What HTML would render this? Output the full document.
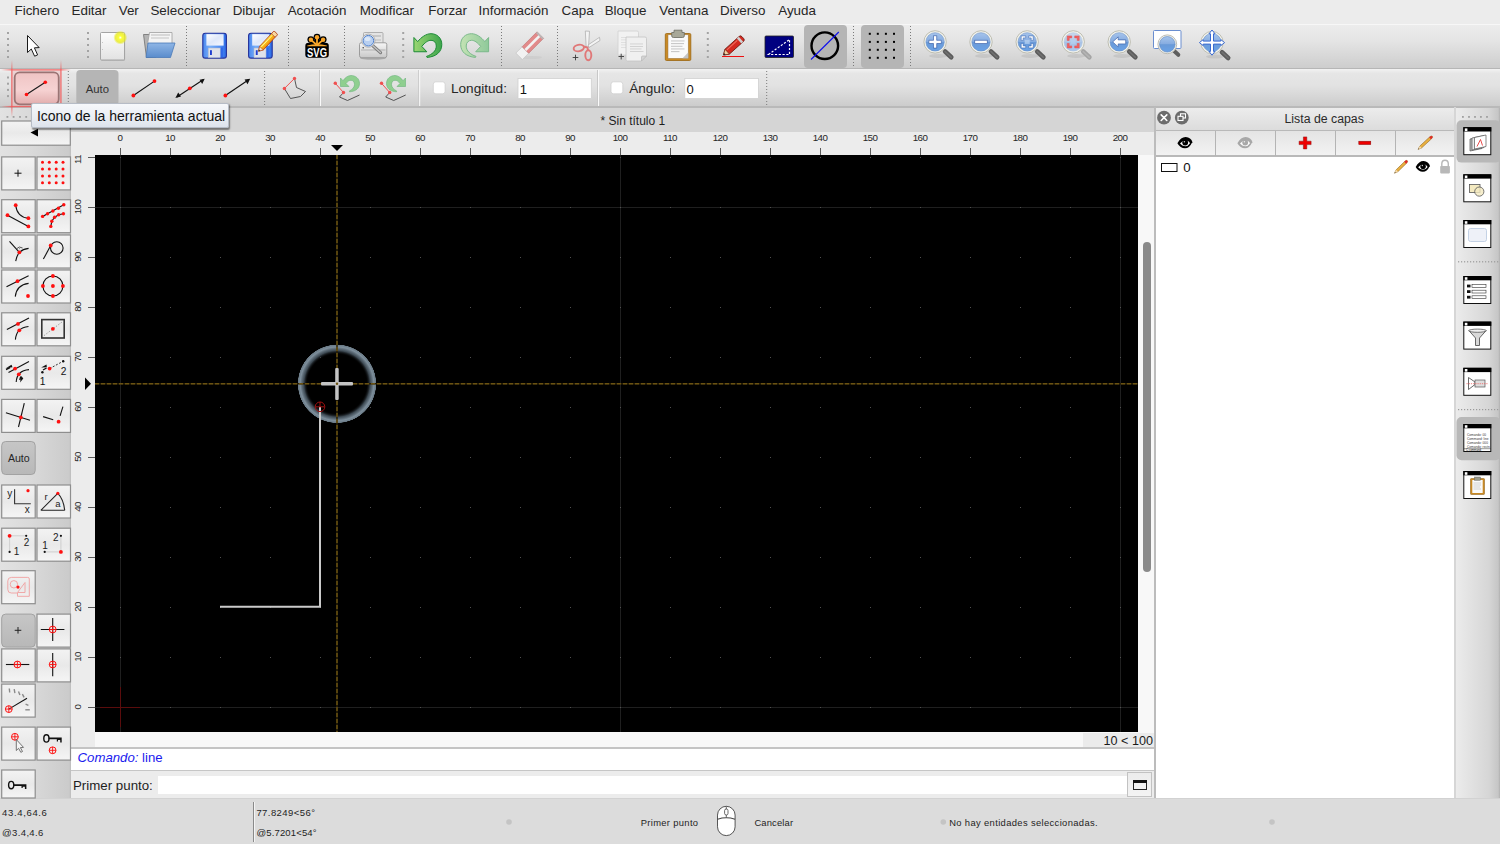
<!DOCTYPE html>
<html><head><meta charset="utf-8"><style>
html,body{margin:0;padding:0;width:1500px;height:844px;overflow:hidden;background:#ececec;position:relative}
body{font-family:"Liberation Sans",sans-serif}
.t{position:absolute;white-space:nowrap}
.r{position:absolute;display:block}
</style></head><body>
<div class="r" style="left:0px;top:0px;width:1500px;height:24px;background:#ececec"></div>
<div class="r" style="left:0px;top:24px;width:1500px;height:44px;background:linear-gradient(#ececec,#e5e5e5 35%,#cdcdcd);border-top:1px solid #f7f7f7;box-sizing:border-box"></div>
<div class="r" style="left:0px;top:68px;width:1500px;height:1px;background:#b6b6b6"></div>
<div class="r" style="left:0px;top:69px;width:1500px;height:37px;background:linear-gradient(#f2f2f2,#e6e6e6 12%,#e2e2e2 45%,#cccccc)"></div>
<div class="r" style="left:0px;top:106px;width:1500px;height:2px;background:#b9b9b9"></div>
<div class="r" style="left:0px;top:108px;width:72px;height:690px;background:linear-gradient(90deg,#e2e2e2,#d9d9d9 45%,#cbcbcb 96%,#b4b4b4)"></div>
<div class="r" style="left:1455px;top:108px;width:45px;height:690px;background:linear-gradient(90deg,#ececec,#d6d6d6 75%,#c6c6c6 96%,#b0b0b0)"></div>
<div class="r" style="left:1455px;top:108px;width:1px;height:690px;background:#d0d0d0"></div>
<div class="r" style="left:71px;top:108px;width:1084px;height:24px;background:#d5d5d5"></div>
<div class="r" style="left:71px;top:132px;width:1084px;height:616px;background:#ececec"></div>
<div class="r" style="left:95px;top:732px;width:1060px;height:16px;background:#f8f8f8"></div>
<svg class="r" style="left:71px;top:132px" width="1084" height="616" viewBox="71 132 1084 616" font-family="Liberation Sans"><text x="120" y="141.2" text-anchor="middle" font-size="9.8" fill="#262626" letter-spacing="-0.6">0</text><rect x="120" y="148" width="1" height="7" fill="#5a5a5a"/><text x="170" y="141.2" text-anchor="middle" font-size="9.8" fill="#262626" letter-spacing="-0.6">10</text><rect x="170" y="148" width="1" height="7" fill="#5a5a5a"/><text x="220" y="141.2" text-anchor="middle" font-size="9.8" fill="#262626" letter-spacing="-0.6">20</text><rect x="220" y="148" width="1" height="7" fill="#5a5a5a"/><text x="270" y="141.2" text-anchor="middle" font-size="9.8" fill="#262626" letter-spacing="-0.6">30</text><rect x="270" y="148" width="1" height="7" fill="#5a5a5a"/><text x="320" y="141.2" text-anchor="middle" font-size="9.8" fill="#262626" letter-spacing="-0.6">40</text><rect x="320" y="148" width="1" height="7" fill="#5a5a5a"/><text x="370" y="141.2" text-anchor="middle" font-size="9.8" fill="#262626" letter-spacing="-0.6">50</text><rect x="370" y="148" width="1" height="7" fill="#5a5a5a"/><text x="420" y="141.2" text-anchor="middle" font-size="9.8" fill="#262626" letter-spacing="-0.6">60</text><rect x="420" y="148" width="1" height="7" fill="#5a5a5a"/><text x="470" y="141.2" text-anchor="middle" font-size="9.8" fill="#262626" letter-spacing="-0.6">70</text><rect x="470" y="148" width="1" height="7" fill="#5a5a5a"/><text x="520" y="141.2" text-anchor="middle" font-size="9.8" fill="#262626" letter-spacing="-0.6">80</text><rect x="520" y="148" width="1" height="7" fill="#5a5a5a"/><text x="570" y="141.2" text-anchor="middle" font-size="9.8" fill="#262626" letter-spacing="-0.6">90</text><rect x="570" y="148" width="1" height="7" fill="#5a5a5a"/><text x="620" y="141.2" text-anchor="middle" font-size="9.8" fill="#262626" letter-spacing="-0.6">100</text><rect x="620" y="148" width="1" height="7" fill="#5a5a5a"/><text x="670" y="141.2" text-anchor="middle" font-size="9.8" fill="#262626" letter-spacing="-0.6">110</text><rect x="670" y="148" width="1" height="7" fill="#5a5a5a"/><text x="720" y="141.2" text-anchor="middle" font-size="9.8" fill="#262626" letter-spacing="-0.6">120</text><rect x="720" y="148" width="1" height="7" fill="#5a5a5a"/><text x="770" y="141.2" text-anchor="middle" font-size="9.8" fill="#262626" letter-spacing="-0.6">130</text><rect x="770" y="148" width="1" height="7" fill="#5a5a5a"/><text x="820" y="141.2" text-anchor="middle" font-size="9.8" fill="#262626" letter-spacing="-0.6">140</text><rect x="820" y="148" width="1" height="7" fill="#5a5a5a"/><text x="870" y="141.2" text-anchor="middle" font-size="9.8" fill="#262626" letter-spacing="-0.6">150</text><rect x="870" y="148" width="1" height="7" fill="#5a5a5a"/><text x="920" y="141.2" text-anchor="middle" font-size="9.8" fill="#262626" letter-spacing="-0.6">160</text><rect x="920" y="148" width="1" height="7" fill="#5a5a5a"/><text x="970" y="141.2" text-anchor="middle" font-size="9.8" fill="#262626" letter-spacing="-0.6">170</text><rect x="970" y="148" width="1" height="7" fill="#5a5a5a"/><text x="1020" y="141.2" text-anchor="middle" font-size="9.8" fill="#262626" letter-spacing="-0.6">180</text><rect x="1020" y="148" width="1" height="7" fill="#5a5a5a"/><text x="1070" y="141.2" text-anchor="middle" font-size="9.8" fill="#262626" letter-spacing="-0.6">190</text><rect x="1070" y="148" width="1" height="7" fill="#5a5a5a"/><text x="1120" y="141.2" text-anchor="middle" font-size="9.8" fill="#262626" letter-spacing="-0.6">200</text><rect x="1120" y="148" width="1" height="7" fill="#5a5a5a"/><svg x="71" y="155" width="24" height="577" viewBox="71 155 24 577"><text transform="translate(80.6,707) rotate(-90)" text-anchor="middle" font-size="9.8" fill="#262626" letter-spacing="-0.6">0</text><rect x="88" y="707" width="7" height="1" fill="#5a5a5a"/><text transform="translate(80.6,657) rotate(-90)" text-anchor="middle" font-size="9.8" fill="#262626" letter-spacing="-0.6">10</text><rect x="88" y="657" width="7" height="1" fill="#5a5a5a"/><text transform="translate(80.6,607) rotate(-90)" text-anchor="middle" font-size="9.8" fill="#262626" letter-spacing="-0.6">20</text><rect x="88" y="607" width="7" height="1" fill="#5a5a5a"/><text transform="translate(80.6,557) rotate(-90)" text-anchor="middle" font-size="9.8" fill="#262626" letter-spacing="-0.6">30</text><rect x="88" y="557" width="7" height="1" fill="#5a5a5a"/><text transform="translate(80.6,507) rotate(-90)" text-anchor="middle" font-size="9.8" fill="#262626" letter-spacing="-0.6">40</text><rect x="88" y="507" width="7" height="1" fill="#5a5a5a"/><text transform="translate(80.6,457) rotate(-90)" text-anchor="middle" font-size="9.8" fill="#262626" letter-spacing="-0.6">50</text><rect x="88" y="457" width="7" height="1" fill="#5a5a5a"/><text transform="translate(80.6,407) rotate(-90)" text-anchor="middle" font-size="9.8" fill="#262626" letter-spacing="-0.6">60</text><rect x="88" y="407" width="7" height="1" fill="#5a5a5a"/><text transform="translate(80.6,357) rotate(-90)" text-anchor="middle" font-size="9.8" fill="#262626" letter-spacing="-0.6">70</text><rect x="88" y="357" width="7" height="1" fill="#5a5a5a"/><text transform="translate(80.6,307) rotate(-90)" text-anchor="middle" font-size="9.8" fill="#262626" letter-spacing="-0.6">80</text><rect x="88" y="307" width="7" height="1" fill="#5a5a5a"/><text transform="translate(80.6,257) rotate(-90)" text-anchor="middle" font-size="9.8" fill="#262626" letter-spacing="-0.6">90</text><rect x="88" y="257" width="7" height="1" fill="#5a5a5a"/><text transform="translate(80.6,207) rotate(-90)" text-anchor="middle" font-size="9.8" fill="#262626" letter-spacing="-0.6">100</text><rect x="88" y="207" width="7" height="1" fill="#5a5a5a"/><text transform="translate(80.6,157) rotate(-90)" text-anchor="middle" font-size="9.8" fill="#262626" letter-spacing="-0.6">110</text><rect x="88" y="157" width="7" height="1" fill="#5a5a5a"/></svg><rect x="95" y="155" width="1043" height="577" fill="#000"/><svg x="95" y="155" width="1043" height="577" viewBox="95 155 1043 577"><rect x="120" y="155" width="1" height="577" fill="#1f1f1f"/><rect x="620" y="155" width="1" height="577" fill="#1f1f1f"/><rect x="1120" y="155" width="1" height="577" fill="#1f1f1f"/><rect x="95" y="207" width="1043" height="1" fill="#1f1f1f"/><rect x="95" y="707" width="1043" height="1" fill="#1f1f1f"/><rect x="120" y="707" width="1" height="1" fill="#505050"/><rect x="120" y="657" width="1" height="1" fill="#505050"/><rect x="120" y="607" width="1" height="1" fill="#505050"/><rect x="120" y="557" width="1" height="1" fill="#505050"/><rect x="120" y="507" width="1" height="1" fill="#505050"/><rect x="120" y="457" width="1" height="1" fill="#505050"/><rect x="120" y="407" width="1" height="1" fill="#505050"/><rect x="120" y="357" width="1" height="1" fill="#505050"/><rect x="120" y="307" width="1" height="1" fill="#505050"/><rect x="120" y="257" width="1" height="1" fill="#505050"/><rect x="120" y="207" width="1" height="1" fill="#505050"/><rect x="120" y="157" width="1" height="1" fill="#505050"/><rect x="170" y="707" width="1" height="1" fill="#505050"/><rect x="170" y="657" width="1" height="1" fill="#505050"/><rect x="170" y="607" width="1" height="1" fill="#505050"/><rect x="170" y="557" width="1" height="1" fill="#505050"/><rect x="170" y="507" width="1" height="1" fill="#505050"/><rect x="170" y="457" width="1" height="1" fill="#505050"/><rect x="170" y="407" width="1" height="1" fill="#505050"/><rect x="170" y="357" width="1" height="1" fill="#505050"/><rect x="170" y="307" width="1" height="1" fill="#505050"/><rect x="170" y="257" width="1" height="1" fill="#505050"/><rect x="170" y="207" width="1" height="1" fill="#505050"/><rect x="170" y="157" width="1" height="1" fill="#505050"/><rect x="220" y="707" width="1" height="1" fill="#505050"/><rect x="220" y="657" width="1" height="1" fill="#505050"/><rect x="220" y="607" width="1" height="1" fill="#505050"/><rect x="220" y="557" width="1" height="1" fill="#505050"/><rect x="220" y="507" width="1" height="1" fill="#505050"/><rect x="220" y="457" width="1" height="1" fill="#505050"/><rect x="220" y="407" width="1" height="1" fill="#505050"/><rect x="220" y="357" width="1" height="1" fill="#505050"/><rect x="220" y="307" width="1" height="1" fill="#505050"/><rect x="220" y="257" width="1" height="1" fill="#505050"/><rect x="220" y="207" width="1" height="1" fill="#505050"/><rect x="220" y="157" width="1" height="1" fill="#505050"/><rect x="270" y="707" width="1" height="1" fill="#505050"/><rect x="270" y="657" width="1" height="1" fill="#505050"/><rect x="270" y="607" width="1" height="1" fill="#505050"/><rect x="270" y="557" width="1" height="1" fill="#505050"/><rect x="270" y="507" width="1" height="1" fill="#505050"/><rect x="270" y="457" width="1" height="1" fill="#505050"/><rect x="270" y="407" width="1" height="1" fill="#505050"/><rect x="270" y="357" width="1" height="1" fill="#505050"/><rect x="270" y="307" width="1" height="1" fill="#505050"/><rect x="270" y="257" width="1" height="1" fill="#505050"/><rect x="270" y="207" width="1" height="1" fill="#505050"/><rect x="270" y="157" width="1" height="1" fill="#505050"/><rect x="320" y="707" width="1" height="1" fill="#505050"/><rect x="320" y="657" width="1" height="1" fill="#505050"/><rect x="320" y="607" width="1" height="1" fill="#505050"/><rect x="320" y="557" width="1" height="1" fill="#505050"/><rect x="320" y="507" width="1" height="1" fill="#505050"/><rect x="320" y="457" width="1" height="1" fill="#505050"/><rect x="320" y="407" width="1" height="1" fill="#505050"/><rect x="320" y="357" width="1" height="1" fill="#505050"/><rect x="320" y="307" width="1" height="1" fill="#505050"/><rect x="320" y="257" width="1" height="1" fill="#505050"/><rect x="320" y="207" width="1" height="1" fill="#505050"/><rect x="320" y="157" width="1" height="1" fill="#505050"/><rect x="370" y="707" width="1" height="1" fill="#505050"/><rect x="370" y="657" width="1" height="1" fill="#505050"/><rect x="370" y="607" width="1" height="1" fill="#505050"/><rect x="370" y="557" width="1" height="1" fill="#505050"/><rect x="370" y="507" width="1" height="1" fill="#505050"/><rect x="370" y="457" width="1" height="1" fill="#505050"/><rect x="370" y="407" width="1" height="1" fill="#505050"/><rect x="370" y="357" width="1" height="1" fill="#505050"/><rect x="370" y="307" width="1" height="1" fill="#505050"/><rect x="370" y="257" width="1" height="1" fill="#505050"/><rect x="370" y="207" width="1" height="1" fill="#505050"/><rect x="370" y="157" width="1" height="1" fill="#505050"/><rect x="420" y="707" width="1" height="1" fill="#505050"/><rect x="420" y="657" width="1" height="1" fill="#505050"/><rect x="420" y="607" width="1" height="1" fill="#505050"/><rect x="420" y="557" width="1" height="1" fill="#505050"/><rect x="420" y="507" width="1" height="1" fill="#505050"/><rect x="420" y="457" width="1" height="1" fill="#505050"/><rect x="420" y="407" width="1" height="1" fill="#505050"/><rect x="420" y="357" width="1" height="1" fill="#505050"/><rect x="420" y="307" width="1" height="1" fill="#505050"/><rect x="420" y="257" width="1" height="1" fill="#505050"/><rect x="420" y="207" width="1" height="1" fill="#505050"/><rect x="420" y="157" width="1" height="1" fill="#505050"/><rect x="470" y="707" width="1" height="1" fill="#505050"/><rect x="470" y="657" width="1" height="1" fill="#505050"/><rect x="470" y="607" width="1" height="1" fill="#505050"/><rect x="470" y="557" width="1" height="1" fill="#505050"/><rect x="470" y="507" width="1" height="1" fill="#505050"/><rect x="470" y="457" width="1" height="1" fill="#505050"/><rect x="470" y="407" width="1" height="1" fill="#505050"/><rect x="470" y="357" width="1" height="1" fill="#505050"/><rect x="470" y="307" width="1" height="1" fill="#505050"/><rect x="470" y="257" width="1" height="1" fill="#505050"/><rect x="470" y="207" width="1" height="1" fill="#505050"/><rect x="470" y="157" width="1" height="1" fill="#505050"/><rect x="520" y="707" width="1" height="1" fill="#505050"/><rect x="520" y="657" width="1" height="1" fill="#505050"/><rect x="520" y="607" width="1" height="1" fill="#505050"/><rect x="520" y="557" width="1" height="1" fill="#505050"/><rect x="520" y="507" width="1" height="1" fill="#505050"/><rect x="520" y="457" width="1" height="1" fill="#505050"/><rect x="520" y="407" width="1" height="1" fill="#505050"/><rect x="520" y="357" width="1" height="1" fill="#505050"/><rect x="520" y="307" width="1" height="1" fill="#505050"/><rect x="520" y="257" width="1" height="1" fill="#505050"/><rect x="520" y="207" width="1" height="1" fill="#505050"/><rect x="520" y="157" width="1" height="1" fill="#505050"/><rect x="570" y="707" width="1" height="1" fill="#505050"/><rect x="570" y="657" width="1" height="1" fill="#505050"/><rect x="570" y="607" width="1" height="1" fill="#505050"/><rect x="570" y="557" width="1" height="1" fill="#505050"/><rect x="570" y="507" width="1" height="1" fill="#505050"/><rect x="570" y="457" width="1" height="1" fill="#505050"/><rect x="570" y="407" width="1" height="1" fill="#505050"/><rect x="570" y="357" width="1" height="1" fill="#505050"/><rect x="570" y="307" width="1" height="1" fill="#505050"/><rect x="570" y="257" width="1" height="1" fill="#505050"/><rect x="570" y="207" width="1" height="1" fill="#505050"/><rect x="570" y="157" width="1" height="1" fill="#505050"/><rect x="620" y="707" width="1" height="1" fill="#505050"/><rect x="620" y="657" width="1" height="1" fill="#505050"/><rect x="620" y="607" width="1" height="1" fill="#505050"/><rect x="620" y="557" width="1" height="1" fill="#505050"/><rect x="620" y="507" width="1" height="1" fill="#505050"/><rect x="620" y="457" width="1" height="1" fill="#505050"/><rect x="620" y="407" width="1" height="1" fill="#505050"/><rect x="620" y="357" width="1" height="1" fill="#505050"/><rect x="620" y="307" width="1" height="1" fill="#505050"/><rect x="620" y="257" width="1" height="1" fill="#505050"/><rect x="620" y="207" width="1" height="1" fill="#505050"/><rect x="620" y="157" width="1" height="1" fill="#505050"/><rect x="670" y="707" width="1" height="1" fill="#505050"/><rect x="670" y="657" width="1" height="1" fill="#505050"/><rect x="670" y="607" width="1" height="1" fill="#505050"/><rect x="670" y="557" width="1" height="1" fill="#505050"/><rect x="670" y="507" width="1" height="1" fill="#505050"/><rect x="670" y="457" width="1" height="1" fill="#505050"/><rect x="670" y="407" width="1" height="1" fill="#505050"/><rect x="670" y="357" width="1" height="1" fill="#505050"/><rect x="670" y="307" width="1" height="1" fill="#505050"/><rect x="670" y="257" width="1" height="1" fill="#505050"/><rect x="670" y="207" width="1" height="1" fill="#505050"/><rect x="670" y="157" width="1" height="1" fill="#505050"/><rect x="720" y="707" width="1" height="1" fill="#505050"/><rect x="720" y="657" width="1" height="1" fill="#505050"/><rect x="720" y="607" width="1" height="1" fill="#505050"/><rect x="720" y="557" width="1" height="1" fill="#505050"/><rect x="720" y="507" width="1" height="1" fill="#505050"/><rect x="720" y="457" width="1" height="1" fill="#505050"/><rect x="720" y="407" width="1" height="1" fill="#505050"/><rect x="720" y="357" width="1" height="1" fill="#505050"/><rect x="720" y="307" width="1" height="1" fill="#505050"/><rect x="720" y="257" width="1" height="1" fill="#505050"/><rect x="720" y="207" width="1" height="1" fill="#505050"/><rect x="720" y="157" width="1" height="1" fill="#505050"/><rect x="770" y="707" width="1" height="1" fill="#505050"/><rect x="770" y="657" width="1" height="1" fill="#505050"/><rect x="770" y="607" width="1" height="1" fill="#505050"/><rect x="770" y="557" width="1" height="1" fill="#505050"/><rect x="770" y="507" width="1" height="1" fill="#505050"/><rect x="770" y="457" width="1" height="1" fill="#505050"/><rect x="770" y="407" width="1" height="1" fill="#505050"/><rect x="770" y="357" width="1" height="1" fill="#505050"/><rect x="770" y="307" width="1" height="1" fill="#505050"/><rect x="770" y="257" width="1" height="1" fill="#505050"/><rect x="770" y="207" width="1" height="1" fill="#505050"/><rect x="770" y="157" width="1" height="1" fill="#505050"/><rect x="820" y="707" width="1" height="1" fill="#505050"/><rect x="820" y="657" width="1" height="1" fill="#505050"/><rect x="820" y="607" width="1" height="1" fill="#505050"/><rect x="820" y="557" width="1" height="1" fill="#505050"/><rect x="820" y="507" width="1" height="1" fill="#505050"/><rect x="820" y="457" width="1" height="1" fill="#505050"/><rect x="820" y="407" width="1" height="1" fill="#505050"/><rect x="820" y="357" width="1" height="1" fill="#505050"/><rect x="820" y="307" width="1" height="1" fill="#505050"/><rect x="820" y="257" width="1" height="1" fill="#505050"/><rect x="820" y="207" width="1" height="1" fill="#505050"/><rect x="820" y="157" width="1" height="1" fill="#505050"/><rect x="870" y="707" width="1" height="1" fill="#505050"/><rect x="870" y="657" width="1" height="1" fill="#505050"/><rect x="870" y="607" width="1" height="1" fill="#505050"/><rect x="870" y="557" width="1" height="1" fill="#505050"/><rect x="870" y="507" width="1" height="1" fill="#505050"/><rect x="870" y="457" width="1" height="1" fill="#505050"/><rect x="870" y="407" width="1" height="1" fill="#505050"/><rect x="870" y="357" width="1" height="1" fill="#505050"/><rect x="870" y="307" width="1" height="1" fill="#505050"/><rect x="870" y="257" width="1" height="1" fill="#505050"/><rect x="870" y="207" width="1" height="1" fill="#505050"/><rect x="870" y="157" width="1" height="1" fill="#505050"/><rect x="920" y="707" width="1" height="1" fill="#505050"/><rect x="920" y="657" width="1" height="1" fill="#505050"/><rect x="920" y="607" width="1" height="1" fill="#505050"/><rect x="920" y="557" width="1" height="1" fill="#505050"/><rect x="920" y="507" width="1" height="1" fill="#505050"/><rect x="920" y="457" width="1" height="1" fill="#505050"/><rect x="920" y="407" width="1" height="1" fill="#505050"/><rect x="920" y="357" width="1" height="1" fill="#505050"/><rect x="920" y="307" width="1" height="1" fill="#505050"/><rect x="920" y="257" width="1" height="1" fill="#505050"/><rect x="920" y="207" width="1" height="1" fill="#505050"/><rect x="920" y="157" width="1" height="1" fill="#505050"/><rect x="970" y="707" width="1" height="1" fill="#505050"/><rect x="970" y="657" width="1" height="1" fill="#505050"/><rect x="970" y="607" width="1" height="1" fill="#505050"/><rect x="970" y="557" width="1" height="1" fill="#505050"/><rect x="970" y="507" width="1" height="1" fill="#505050"/><rect x="970" y="457" width="1" height="1" fill="#505050"/><rect x="970" y="407" width="1" height="1" fill="#505050"/><rect x="970" y="357" width="1" height="1" fill="#505050"/><rect x="970" y="307" width="1" height="1" fill="#505050"/><rect x="970" y="257" width="1" height="1" fill="#505050"/><rect x="970" y="207" width="1" height="1" fill="#505050"/><rect x="970" y="157" width="1" height="1" fill="#505050"/><rect x="1020" y="707" width="1" height="1" fill="#505050"/><rect x="1020" y="657" width="1" height="1" fill="#505050"/><rect x="1020" y="607" width="1" height="1" fill="#505050"/><rect x="1020" y="557" width="1" height="1" fill="#505050"/><rect x="1020" y="507" width="1" height="1" fill="#505050"/><rect x="1020" y="457" width="1" height="1" fill="#505050"/><rect x="1020" y="407" width="1" height="1" fill="#505050"/><rect x="1020" y="357" width="1" height="1" fill="#505050"/><rect x="1020" y="307" width="1" height="1" fill="#505050"/><rect x="1020" y="257" width="1" height="1" fill="#505050"/><rect x="1020" y="207" width="1" height="1" fill="#505050"/><rect x="1020" y="157" width="1" height="1" fill="#505050"/><rect x="1070" y="707" width="1" height="1" fill="#505050"/><rect x="1070" y="657" width="1" height="1" fill="#505050"/><rect x="1070" y="607" width="1" height="1" fill="#505050"/><rect x="1070" y="557" width="1" height="1" fill="#505050"/><rect x="1070" y="507" width="1" height="1" fill="#505050"/><rect x="1070" y="457" width="1" height="1" fill="#505050"/><rect x="1070" y="407" width="1" height="1" fill="#505050"/><rect x="1070" y="357" width="1" height="1" fill="#505050"/><rect x="1070" y="307" width="1" height="1" fill="#505050"/><rect x="1070" y="257" width="1" height="1" fill="#505050"/><rect x="1070" y="207" width="1" height="1" fill="#505050"/><rect x="1070" y="157" width="1" height="1" fill="#505050"/><rect x="1120" y="707" width="1" height="1" fill="#505050"/><rect x="1120" y="657" width="1" height="1" fill="#505050"/><rect x="1120" y="607" width="1" height="1" fill="#505050"/><rect x="1120" y="557" width="1" height="1" fill="#505050"/><rect x="1120" y="507" width="1" height="1" fill="#505050"/><rect x="1120" y="457" width="1" height="1" fill="#505050"/><rect x="1120" y="407" width="1" height="1" fill="#505050"/><rect x="1120" y="357" width="1" height="1" fill="#505050"/><rect x="1120" y="307" width="1" height="1" fill="#505050"/><rect x="1120" y="257" width="1" height="1" fill="#505050"/><rect x="1120" y="207" width="1" height="1" fill="#505050"/><rect x="1120" y="157" width="1" height="1" fill="#505050"/><rect x="120" y="687" width="1" height="40" fill="#5a0c0c"/><rect x="100" y="707" width="40" height="1" fill="#5a0c0c"/><defs><radialGradient id="ring" cx="337" cy="383.8" r="39.5" gradientUnits="userSpaceOnUse"><stop offset="0.74" stop-color="#000" stop-opacity="0"/><stop offset="0.84" stop-color="#4d5c68" stop-opacity="0.8"/><stop offset="0.93" stop-color="#7d8e9b"/><stop offset="0.985" stop-color="#6a7a86"/><stop offset="1" stop-color="#000" stop-opacity="0"/></radialGradient></defs><circle cx="337" cy="383.8" r="39.5" fill="url(#ring)"/><path d="M220 606.8 H320 V407" fill="none" stroke="#cacaca" stroke-width="2"/><line x1="337" y1="155" x2="337" y2="732" stroke="#2a2006" stroke-width="1.5"/><line x1="95" y1="383.8" x2="1138" y2="383.8" stroke="#2a2006" stroke-width="1.5"/><line x1="337" y1="155" x2="337" y2="732" stroke="#6a5212" stroke-width="1.5" stroke-dasharray="4 2"/><line x1="95" y1="383.8" x2="1138" y2="383.8" stroke="#6a5212" stroke-width="1.5" stroke-dasharray="4 2"/><rect x="321" y="382" width="32" height="3.5" rx="1" fill="#c4c4c4"/><rect x="335.2" y="368" width="3.5" height="32" rx="1" fill="#c4c4c4"/><circle cx="337" cy="383.8" r="1.2" fill="#6e5310"/><circle cx="320" cy="406.8" r="4.8" fill="none" stroke="#a01010" stroke-width="1"/><line x1="315.5" y1="406.8" x2="324.5" y2="406.8" stroke="#a01010" stroke-width="1"/><line x1="320" y1="402" x2="320" y2="407" stroke="#a01010" stroke-width="1"/></svg><path d="M331 145 H343 L337 151 Z" fill="#000"/><path d="M85 377.5 V390 L91 383.8 Z" fill="#000"/></svg>
<div class="r" style="left:1138px;top:155px;width:16px;height:577px;background:#f8f8f8"></div>
<div class="r" style="left:1143px;top:242px;width:8px;height:330px;background:#8a8a8a;border-radius:4px"></div>
<div class="r" style="left:1083px;top:733px;width:71px;height:15px;background:#ebebeb"></div>
<div class="r" style="left:1154px;top:107px;width:2px;height:691px;background:#bdbdbd"></div>
<div class="r" style="left:71px;top:747px;width:1083px;height:2px;background:#c4c4c4"></div>
<div class="r" style="left:71px;top:749px;width:1083px;height:21px;background:#fff"></div>
<div class="r" style="left:71px;top:770px;width:1083px;height:1px;background:#c6c6c6"></div>
<div class="r" style="left:71px;top:771px;width:1083px;height:27px;background:#ececec"></div>
<div class="r" style="left:158px;top:776px;width:969px;height:18px;background:#fff"></div>
<div class="r" style="left:1127px;top:772px;width:25px;height:25px;background:linear-gradient(#ececec,#f3f3f3);border:1px solid #c2c2c2;box-sizing:border-box"></div>
<div class="r" style="left:1155px;top:108px;width:300px;height:690px;background:#fff"></div>
<div class="r" style="left:1155px;top:108px;width:300px;height:690px;background:#fff"></div>
<div class="r" style="left:1155px;top:108px;width:300px;height:22px;background:linear-gradient(#ececec,#dcdcdc)"></div>
<div class="r" style="left:1155px;top:130px;width:300px;height:1.5px;background:#b9b9b9"></div>
<div class="r" style="left:1155px;top:131px;width:300px;height:24.5px;background:linear-gradient(#e4e4e4,#f3f3f3)"></div>
<div class="r" style="left:1155px;top:155px;width:300px;height:1.6px;background:#b9b9b9"></div>
<div class="r" style="left:1155px;top:131px;width:1.4px;height:25px;background:#b4b4b4"></div>
<div class="r" style="left:1214.6px;top:131px;width:1.4px;height:25px;background:#b4b4b4"></div>
<div class="r" style="left:1274.6px;top:131px;width:1.4px;height:25px;background:#b4b4b4"></div>
<div class="r" style="left:1334.6px;top:131px;width:1.4px;height:25px;background:#b4b4b4"></div>
<div class="r" style="left:1394.6px;top:131px;width:1.4px;height:25px;background:#b4b4b4"></div>
<div class="r" style="left:1454px;top:107px;width:1.5px;height:691px;background:#d6d6d6"></div>
<div class="r" style="left:1154px;top:107px;width:2px;height:691px;background:#bcbcbc"></div>
<div class="r" style="left:0px;top:798px;width:1500px;height:46px;background:#dcdcdc"></div>
<div class="r" style="left:0px;top:798px;width:1500px;height:1px;background:#d2d2d2"></div>
<div class="r" style="left:253px;top:802px;width:1px;height:40px;background:#8a8a8a"></div>
<div class="r" style="left:254px;top:802px;width:1px;height:40px;background:#f4f4f4"></div>
<svg class="r" style="left:0;top:0" width="1500" height="844" viewBox="0 0 1500 844" font-family="Liberation Sans"><rect x="1133.5" y="780.5" width="13" height="9" fill="#f0f0f0" stroke="#222" stroke-width="1"/><rect x="1133" y="780" width="14" height="3" fill="#111"/><defs>
<linearGradient id="gPage" x1="0" y1="0" x2="0" y2="1"><stop offset="0" stop-color="#fdfdfd"/><stop offset="1" stop-color="#e2e2e2"/></linearGradient>
<radialGradient id="gGlow"><stop offset="0" stop-color="#ffffff"/><stop offset="0.25" stop-color="#fbff3a"/><stop offset="0.7" stop-color="#e8ea20" stop-opacity="0.8"/><stop offset="1" stop-color="#e8ea20" stop-opacity="0"/></radialGradient>
<linearGradient id="gFolder" x1="0" y1="0" x2="0" y2="1"><stop offset="0" stop-color="#8fb6e6"/><stop offset="1" stop-color="#5a8ccc"/></linearGradient>
<linearGradient id="gFloppy" x1="0" y1="0" x2="1" y2="0"><stop offset="0" stop-color="#4a86ee"/><stop offset="0.3" stop-color="#78b0fa"/><stop offset="0.75" stop-color="#4f8cf2"/><stop offset="1" stop-color="#2a6ae6"/></linearGradient>
<linearGradient id="gLabel" x1="0" y1="0" x2="1" y2="1"><stop offset="0" stop-color="#ffffff"/><stop offset="0.5" stop-color="#dfe8fa"/><stop offset="1" stop-color="#f4f7ff"/></linearGradient>
<linearGradient id="gUndo" x1="0" y1="0" x2="1" y2="0"><stop offset="0" stop-color="#9bd672"/><stop offset="1" stop-color="#3da54c"/></linearGradient>
<linearGradient id="gRedo" x1="1" y1="0" x2="0" y2="0"><stop offset="0" stop-color="#c3e3b4"/><stop offset="1" stop-color="#8fc99a"/></linearGradient>
<linearGradient id="gLens" x1="0" y1="0" x2="0" y2="1"><stop offset="0" stop-color="#a6c4ec"/><stop offset="0.48" stop-color="#86ace0"/><stop offset="0.52" stop-color="#6a9ad8"/><stop offset="1" stop-color="#6aa2e6"/></linearGradient>
<linearGradient id="gLensD" x1="0" y1="0" x2="0" y2="1"><stop offset="0" stop-color="#c8d8ee"/><stop offset="0.48" stop-color="#b4cae8"/><stop offset="0.52" stop-color="#a8c2e6"/><stop offset="1" stop-color="#aac8ee"/></linearGradient>
<linearGradient id="gPrinter" x1="0" y1="0" x2="0" y2="1"><stop offset="0" stop-color="#f6f6f6"/><stop offset="1" stop-color="#c8c8c8"/></linearGradient>
</defs><rect x="7" y="32" width="2" height="2" fill="#a3a3a3"/><rect x="7" y="38" width="2" height="2" fill="#a3a3a3"/><rect x="7" y="44" width="2" height="2" fill="#a3a3a3"/><rect x="7" y="50" width="2" height="2" fill="#a3a3a3"/><rect x="7" y="56" width="2" height="2" fill="#a3a3a3"/><path d="M27.5 35.5 V52.5 L31.3 49 L34.6 56.2 L37.6 54.9 L34.4 47.8 L39.2 47.6 Z" fill="#fff" stroke="#1a1a1a" stroke-width="1" stroke-linejoin="round"/><rect x="87" y="32" width="2" height="2" fill="#a3a3a3"/><rect x="87" y="38" width="2" height="2" fill="#a3a3a3"/><rect x="87" y="44" width="2" height="2" fill="#a3a3a3"/><rect x="87" y="50" width="2" height="2" fill="#a3a3a3"/><rect x="87" y="56" width="2" height="2" fill="#a3a3a3"/><rect x="100.5" y="32.5" width="24" height="27.5" rx="1" fill="#9a9a9a" opacity="0.5" transform="translate(0.6,0.8)"/><rect x="100.5" y="32.5" width="24" height="27.5" rx="1" fill="url(#gPage)" stroke="#a4a4a4" stroke-width="1"/><rect x="102" y="42" width="1" height="0.8" fill="#bbb"/><rect x="102" y="49" width="1" height="0.8" fill="#bbb"/><circle cx="120.3" cy="37.6" r="7" fill="url(#gGlow)"/><path d="M143.5 34.5 L150 34.5 L151 36 L156 36 L156 57 L146.5 57.5 Z" fill="#b4b4b4" stroke="#6e6e6e" stroke-width="0.8"/><path d="M149.5 32.5 H172 V44 H147.5 Z" fill="#f4f4f4" stroke="#a0a0a0" stroke-width="0.8"/><path d="M151 35 H170" stroke="#bbb" stroke-width="1"/><path d="M151 38 H169" stroke="#c4c4c4" stroke-width="1"/><path d="M148 43 H175 L170.5 57.5 H146 Z" fill="url(#gFolder)" stroke="#4a7ab8" stroke-width="0.8" stroke-linejoin="round"/><line x1="186.5" y1="26" x2="186.5" y2="67" stroke="#7a7a7a" stroke-width="1" stroke-dasharray="1 2"/><rect x="202.79999999999998" y="33.3" width="23.6" height="24.8" rx="2.4" fill="url(#gFloppy)" stroke="#22309a" stroke-width="1.1"/><rect x="206.39999999999998" y="34.2" width="17.2" height="11.4" fill="url(#gLabel)"/><rect x="208.2" y="48" width="12" height="9.6" fill="#dfe2ea" stroke="#a8b0c8" stroke-width="0.5"/><rect x="210.0" y="50.2" width="1.9" height="4.8" fill="#1f3ed0"/><rect x="220.79999999999998" y="47.5" width="2" height="10" fill="#2a60e6" opacity="0.8"/><rect x="248.6" y="33.3" width="23.6" height="24.8" rx="2.4" fill="url(#gFloppy)" stroke="#22309a" stroke-width="1.1"/><rect x="252.2" y="34.2" width="17.2" height="11.4" fill="url(#gLabel)"/><rect x="254" y="48" width="12" height="9.6" fill="#dfe2ea" stroke="#a8b0c8" stroke-width="0.5"/><rect x="255.8" y="50.2" width="1.9" height="4.8" fill="#1f3ed0"/><rect x="266.6" y="47.5" width="2" height="10" fill="#2a60e6" opacity="0.8"/><defs><linearGradient id="gPen" x1="0" y1="0" x2="0" y2="1"><stop offset="0" stop-color="#ffe040"/><stop offset="0.5" stop-color="#f8b818"/><stop offset="1" stop-color="#f08a10"/></linearGradient></defs><g transform="translate(258.6,51.2) rotate(-47)"><path d="M0 0 L4.2 -2.6 H23.5 Q25.3 -2.6 25.3 -0.8 V0.8 Q25.3 2.6 23.5 2.6 H4.2 Z" fill="url(#gPen)" stroke="#a83010" stroke-width="0.7"/><path d="M0 0 L4.2 -2.6 V2.6 Z" fill="#f4e2c0" stroke="#a83010" stroke-width="0.5"/><path d="M0 0 L1.5 -0.9 V0.9 Z" fill="#1a3a2a"/><rect x="21.5" y="-2.6" width="3.8" height="5.2" rx="1" fill="#f8d8a0" stroke="#a83010" stroke-width="0.6"/><path d="M5 -0.9 H21" stroke="#fff3a0" stroke-width="0.9"/></g><line x1="288.5" y1="26" x2="288.5" y2="67" stroke="#7a7a7a" stroke-width="1" stroke-dasharray="1 2"/><g stroke="#000" stroke-linecap="round"><path d="M317 44.5 V37.2" stroke-width="4.6"/><path d="M316 44.5 L310.8 39.6" stroke-width="4.6"/><path d="M318 44.5 L323.2 39.6" stroke-width="4.6"/></g><circle cx="317" cy="37.2" r="3.4" fill="#000"/><circle cx="310.8" cy="39.6" r="3.4" fill="#000"/><circle cx="323.2" cy="39.6" r="3.4" fill="#000"/><rect x="305.3" y="42.7" width="23.5" height="15.1" rx="3.2" fill="#000"/><g stroke="#f9a62a" stroke-linecap="round"><path d="M317 44.5 V37.5" stroke-width="1.8"/><path d="M316.2 44.5 L311 39.8" stroke-width="1.8"/><path d="M317.8 44.5 L323 39.8" stroke-width="1.8"/></g><circle cx="317" cy="37.3" r="2.2" fill="#f9a62a"/><circle cx="310.9" cy="39.7" r="2.2" fill="#f9a62a"/><circle cx="323.1" cy="39.7" r="2.2" fill="#f9a62a"/><path d="M307.3 45.6 Q317 42.8 326.8 45.6 L326.8 46.2 H307.3 Z" fill="#f9a62a"/><text transform="translate(317,56.6) scale(0.74,1)" text-anchor="middle" font-size="12.8" font-weight="bold" fill="#fff" font-family="Liberation Sans">SVG</text><line x1="344.5" y1="26" x2="344.5" y2="67" stroke="#7a7a7a" stroke-width="1" stroke-dasharray="1 2"/><rect x="363.5" y="32.5" width="19.5" height="14" rx="1" fill="#e4e4e4" stroke="#a8a8a8" stroke-width="0.9"/><rect x="373" y="35" width="8" height="2" fill="#c8c8c8"/><rect x="373" y="39" width="8" height="2" fill="#d0d0d0"/><ellipse cx="373" cy="58" rx="13" ry="1.8" fill="#8a8a8a" opacity="0.55"/><path d="M359.5 44.5 Q359.5 42.8 361.2 42.8 H385.1 Q386.8 42.8 386.8 44.5 V55.5 Q386.8 57.8 384.5 57.8 H361.8 Q359.5 57.8 359.5 55.5 Z" fill="url(#gPrinter)" stroke="#949494" stroke-width="0.9"/><rect x="361" y="49.5" width="24.5" height="1" fill="#b0b0b0"/><circle cx="363.2" cy="47.8" r="0.8" fill="#444"/><line x1="372" y1="45" x2="380.5" y2="52.6" stroke="#7a7a7a" stroke-width="3.2" stroke-linecap="round"/><line x1="372" y1="45" x2="380.5" y2="52.6" stroke="#c4c4c4" stroke-width="1.3" stroke-linecap="round"/><circle cx="368.4" cy="40.7" r="6.6" fill="#f4f4f4" stroke="#a4a4a4" stroke-width="0.8"/><circle cx="368.4" cy="40.7" r="5.3" fill="#b8cff0" stroke="#4f80cc" stroke-width="1"/><ellipse cx="367.6" cy="39" rx="3" ry="2" fill="#e4eefa" opacity="0.8"/><rect x="402.2" y="32" width="2" height="2" fill="#a3a3a3"/><rect x="402.2" y="38" width="2" height="2" fill="#a3a3a3"/><rect x="402.2" y="44" width="2" height="2" fill="#a3a3a3"/><rect x="402.2" y="50" width="2" height="2" fill="#a3a3a3"/><rect x="402.2" y="56" width="2" height="2" fill="#a3a3a3"/><path d="M413.9 37.5 L417.7 41.6 C421 37.5 426 33.7 431 33.7 C437 33.7 441.8 38 441.8 44.5 C441.8 52 436 56.8 427 57.4 L426.5 56.4 C432 54.5 436.3 51 436.3 46 C436.3 42.5 434 40.3 431 40.3 C428 40.3 425 42.5 421.8 46.4 L426.8 51.75 L413.9 51.75 Z" fill="url(#gUndo)" stroke="#1b8a35" stroke-width="1" stroke-linejoin="round"/><path d="M413.9 37.5 L417.7 41.6 C421 37.5 426 33.7 431 33.7 C437 33.7 441.8 38 441.8 44.5 C441.8 52 436 56.8 427 57.4 L426.5 56.4 C432 54.5 436.3 51 436.3 46 C436.3 42.5 434 40.3 431 40.3 C428 40.3 425 42.5 421.8 46.4 L426.8 51.75 L413.9 51.75 Z" transform="translate(902.5,0) scale(-1,1)" fill="url(#gRedo)" stroke="#7ab98a" stroke-width="1" stroke-linejoin="round"/><line x1="501.5" y1="26" x2="501.5" y2="67" stroke="#7a7a7a" stroke-width="1" stroke-dasharray="1 2"/><ellipse cx="531" cy="57.5" rx="11" ry="1.6" fill="#c8c8c8" opacity="0.6"/><g transform="translate(521.2,54.2) rotate(-45)"><rect x="-3" y="-4.6" width="9" height="9.2" fill="#f2f2f2" stroke="#c0c0c0" stroke-width="0.6"/><rect x="6" y="-4.6" width="21" height="9.2" fill="#e28a8a" stroke="#c07070" stroke-width="0.6"/><rect x="6" y="-1.3" width="21" height="2.6" fill="#f2f2f2"/><rect x="25.5" y="-4.6" width="1.8" height="9.2" fill="#b8b8b8"/></g><line x1="557.5" y1="26" x2="557.5" y2="67" stroke="#7a7a7a" stroke-width="1" stroke-dasharray="1 2"/><path d="M585.3 31 L589.5 31.3 L588.5 47 L586.2 47 Z" fill="#f4f4f4" stroke="#a8a8a8" stroke-width="0.7"/><path d="M599.5 37.3 L600 40.5 L589 47.5 L588 45 Z" fill="#f4f4f4" stroke="#a8a8a8" stroke-width="0.7"/><ellipse cx="578.8" cy="48" rx="5.2" ry="3.2" transform="rotate(-12 578.8 48)" fill="none" stroke="#e07878" stroke-width="1.9"/><ellipse cx="588.3" cy="55.3" rx="3" ry="5" fill="none" stroke="#e07878" stroke-width="1.9"/><path d="M583.5 46.5 L587.5 47.5 L588 50.5" fill="none" stroke="#e07878" stroke-width="1.9"/><path d="M572.7 57.5 H578.3 M575.5 54.7 V60.3" stroke="#3a3a3a" stroke-width="0.9"/><path d="M618 31 H637 Q638.5 31 638.5 32.5 V55 H618 Z" fill="#f2f2f2" stroke="#d0d0d0" stroke-width="0.8"/><rect x="621" y="37" width="5" height="0.8" fill="#dadada"/><rect x="621" y="39.5" width="5" height="0.8" fill="#dadada"/><rect x="621" y="42" width="5" height="0.8" fill="#dadada"/><rect x="621" y="44.5" width="5" height="0.8" fill="#dadada"/><rect x="621" y="47" width="5" height="0.8" fill="#dadada"/><path d="M626 37 H645 Q646.5 37 646.5 38.5 V56 L641.5 61 H627.5 Q626 61 626 59.5 Z" fill="#f0f0f0" stroke="#c4c4c4" stroke-width="0.8"/><path d="M646.5 56 L641.5 61 V57 Q641.5 56 642.5 56 Z" fill="#d4d4d4" stroke="#b4b4b4" stroke-width="0.6"/><rect x="630" y="43.5" width="13" height="0.9" fill="#cfcfcf"/><rect x="630" y="46" width="13" height="0.9" fill="#cfcfcf"/><rect x="630" y="48.5" width="11.5" height="0.9" fill="#cfcfcf"/><rect x="630" y="51" width="13.5" height="0.9" fill="#cfcfcf"/><path d="M618.5 56.5 H624 M621.2 53.7 V59.4" stroke="#4a4a4a" stroke-width="1"/><rect x="665.3" y="33.5" width="25.5" height="27" rx="1.2" fill="#c98a24" stroke="#9a6410" stroke-width="0.8"/><rect x="668" y="34.8" width="20.2" height="23.5" fill="#fafafa" stroke="#9a7a50" stroke-width="0.5"/><path d="M688.2 58.3 H682.5 L688.2 52.6 Z" fill="#c4c4c4"/><rect x="671" y="40.5" width="13.5" height="0.9" fill="#bdbdbd"/><rect x="671" y="43.2" width="13" height="0.9" fill="#bdbdbd"/><rect x="671" y="45.8" width="11.5" height="0.9" fill="#bdbdbd"/><rect x="671" y="48.5" width="13.5" height="0.9" fill="#bdbdbd"/><rect x="671" y="51.2" width="8.5" height="0.9" fill="#bdbdbd"/><path d="M674 30.2 H682 V32.5 H684.3 V36 Q684.3 37.5 682.5 37.5 H673.5 Q671.7 37.5 671.7 36 V32.5 H674 Z" fill="#a8a898" stroke="#6a6a60" stroke-width="0.8"/><rect x="706.8" y="32" width="2" height="2" fill="#a3a3a3"/><rect x="706.8" y="38" width="2" height="2" fill="#a3a3a3"/><rect x="706.8" y="44" width="2" height="2" fill="#a3a3a3"/><rect x="706.8" y="50" width="2" height="2" fill="#a3a3a3"/><rect x="706.8" y="56" width="2" height="2" fill="#a3a3a3"/><line x1="722" y1="56.5" x2="744" y2="56.5" stroke="#ee1010" stroke-width="1"/><g transform="translate(723.5,55) rotate(-42)"><path d="M0 0 L5 -3.3 H24 Q26 -3.3 26 -1.3 V1.3 Q26 3.3 24 3.3 H5 Z" fill="#d42a20" stroke="#6a1a10" stroke-width="0.8"/><path d="M0 0 L5 -3.3 V3.3 Z" fill="#f0d0a0" stroke="#6a1a10" stroke-width="0.6"/><path d="M0 0 L1.8 -1.2 V1.2 Z" fill="#222"/><rect x="21" y="-3.3" width="2.5" height="6.6" fill="#d0d0d0"/><path d="M6 -1.6 H20" stroke="#f07060" stroke-width="1"/></g><rect x="765" y="36" width="28.5" height="21.5" rx="1" fill="#000080" stroke="#222" stroke-width="0.8"/><path d="M768.5 54.5 L789.5 39.5 V54.5 Z" fill="none" stroke="#ffffff" stroke-width="1.2" stroke-dasharray="2.2 1.6"/><rect x="804" y="25" width="43" height="43" rx="4" fill="#b5b5b5"/><circle cx="824.8" cy="45.7" r="13.3" fill="none" stroke="#000" stroke-width="2.4"/><line x1="811" y1="59.5" x2="838.8" y2="32" stroke="#1010ee" stroke-width="1.1"/><line x1="853.5" y1="26" x2="853.5" y2="67" stroke="#7a7a7a" stroke-width="1" stroke-dasharray="1 2"/><rect x="861" y="25" width="43" height="43" rx="4" fill="#b5b5b5"/><rect x="868.8" y="32.8" width="2" height="2" fill="#000"/><rect x="868.8" y="40.9" width="2" height="2" fill="#000"/><rect x="868.8" y="48.8" width="2" height="2" fill="#000"/><rect x="868.8" y="56.8" width="2" height="2" fill="#000"/><rect x="876.8" y="32.8" width="2" height="2" fill="#000"/><rect x="876.8" y="40.9" width="2" height="2" fill="#000"/><rect x="876.8" y="48.8" width="2" height="2" fill="#000"/><rect x="876.8" y="56.8" width="2" height="2" fill="#000"/><rect x="884.9" y="32.8" width="2" height="2" fill="#000"/><rect x="884.9" y="40.9" width="2" height="2" fill="#000"/><rect x="884.9" y="48.8" width="2" height="2" fill="#000"/><rect x="884.9" y="56.8" width="2" height="2" fill="#000"/><rect x="893" y="32.8" width="2" height="2" fill="#000"/><rect x="893" y="40.9" width="2" height="2" fill="#000"/><rect x="893" y="48.8" width="2" height="2" fill="#000"/><rect x="893" y="56.8" width="2" height="2" fill="#000"/><line x1="910.5" y1="26" x2="910.5" y2="67" stroke="#7a7a7a" stroke-width="1" stroke-dasharray="1 2"/><ellipse cx="938.1" cy="55.9" rx="9" ry="2" fill="#a0a0a0" opacity="0.3"/><line x1="945.1" y1="51.5" x2="951.3000000000001" y2="57.3" stroke="#5c5c5c" stroke-width="4.6" stroke-linecap="round"/><line x1="945.1" y1="51.5" x2="951.3000000000001" y2="57.3" stroke="#7a7a7a" stroke-width="1.6" stroke-linecap="round" opacity="0.7"/><circle cx="935.1" cy="41.9" r="11.2" fill="#f3f3ec" stroke="#b8b8ac" stroke-width="0.9"/><circle cx="935.1" cy="41.9" r="9.2" fill="url(#gLens)" stroke="#6a90c8" stroke-width="0.6"/><path d="M933.5 35.699999999999996 h3.2 v4.6 h4.6 v3.2 h-4.6 v4.6 h-3.2 v-4.6 h-4.6 v-3.2 h4.6 Z" fill="#fff" stroke="#2a52a0" stroke-width="0.6"/><ellipse cx="984" cy="55.9" rx="9" ry="2" fill="#a0a0a0" opacity="0.3"/><line x1="991" y1="51.5" x2="997.2" y2="57.3" stroke="#5c5c5c" stroke-width="4.6" stroke-linecap="round"/><line x1="991" y1="51.5" x2="997.2" y2="57.3" stroke="#7a7a7a" stroke-width="1.6" stroke-linecap="round" opacity="0.7"/><circle cx="981" cy="41.9" r="11.2" fill="#f3f3ec" stroke="#b8b8ac" stroke-width="0.9"/><circle cx="981" cy="41.9" r="9.2" fill="url(#gLens)" stroke="#6a90c8" stroke-width="0.6"/><rect x="974.8" y="40.199999999999996" width="12.4" height="3.4" fill="#fff" stroke="#2a52a0" stroke-width="0.6"/><ellipse cx="1030.2" cy="55.9" rx="9" ry="2" fill="#a0a0a0" opacity="0.3"/><line x1="1037.2" y1="51.5" x2="1043.4" y2="57.3" stroke="#5c5c5c" stroke-width="4.6" stroke-linecap="round"/><line x1="1037.2" y1="51.5" x2="1043.4" y2="57.3" stroke="#7a7a7a" stroke-width="1.6" stroke-linecap="round" opacity="0.7"/><circle cx="1027.2" cy="41.9" r="11.2" fill="#f3f3ec" stroke="#b8b8ac" stroke-width="0.9"/><circle cx="1027.2" cy="41.9" r="9.2" fill="url(#gLens)" stroke="#6a90c8" stroke-width="0.6"/><rect x="1024.7" y="39.9" width="5" height="4" fill="#b4cff0" opacity="0.8"/><path d="M1021.2 40.4 V35.9 H1025.7 V37.9 H1023.2 V40.4 Z M1033.2 40.4 V35.9 H1028.7 V37.9 H1031.2 V40.4 Z M1021.2 43.4 V47.9 H1025.7 V45.9 H1023.2 V43.4 Z M1033.2 43.4 V47.9 H1028.7 V45.9 H1031.2 V43.4 Z" fill="#fff" stroke="#2a5aa8" stroke-width="0.5"/><ellipse cx="1076.2" cy="55.9" rx="9" ry="2" fill="#a0a0a0" opacity="0.3"/><line x1="1083.2" y1="51.5" x2="1089.4" y2="57.3" stroke="#a4a4a4" stroke-width="4.6" stroke-linecap="round"/><line x1="1083.2" y1="51.5" x2="1089.4" y2="57.3" stroke="#bcbcbc" stroke-width="1.6" stroke-linecap="round" opacity="0.7"/><circle cx="1073.2" cy="41.9" r="11.2" fill="#f3f3ec" stroke="#b8b8ac" stroke-width="0.9"/><circle cx="1073.2" cy="41.9" r="9.2" fill="url(#gLensD)" stroke="#b0c4de" stroke-width="0.6"/><rect x="1070.7" y="39.9" width="5" height="4" fill="#b4cff0" opacity="0.8"/><path d="M1067.2 40.4 V35.9 H1071.7 V37.9 H1069.2 V40.4 Z M1079.2 40.4 V35.9 H1074.7 V37.9 H1077.2 V40.4 Z M1067.2 43.4 V47.9 H1071.7 V45.9 H1069.2 V43.4 Z M1079.2 43.4 V47.9 H1074.7 V45.9 H1077.2 V43.4 Z" fill="#f06262" stroke="#e05050" stroke-width="0.5"/><ellipse cx="1122.2" cy="55.9" rx="9" ry="2" fill="#a0a0a0" opacity="0.3"/><line x1="1129.2" y1="51.5" x2="1135.4" y2="57.3" stroke="#5c5c5c" stroke-width="4.6" stroke-linecap="round"/><line x1="1129.2" y1="51.5" x2="1135.4" y2="57.3" stroke="#7a7a7a" stroke-width="1.6" stroke-linecap="round" opacity="0.7"/><circle cx="1119.2" cy="41.9" r="11.2" fill="#f3f3ec" stroke="#b8b8ac" stroke-width="0.9"/><circle cx="1119.2" cy="41.9" r="9.2" fill="url(#gLens)" stroke="#6a90c8" stroke-width="0.6"/><path d="M1112.7 41.9 L1118.2 36.9 V39.9 H1125.7 V43.9 H1118.2 V46.9 Z" fill="#fff" stroke="#2a52a0" stroke-width="0.6"/><rect x="1153.5" y="30.5" width="27.5" height="18" rx="1" fill="#fff" stroke="#6a8ed0" stroke-width="1"/><line x1="1172.3" y1="49.3" x2="1178.3" y2="54.8" stroke="#5e5e5e" stroke-width="4" stroke-linecap="round"/><circle cx="1167.3" cy="44.3" r="9.4" fill="#f4f4ee" stroke="#b4b4ac" stroke-width="0.9"/><circle cx="1167.3" cy="44.3" r="7.8" fill="url(#gLens)" stroke="#5a84c0" stroke-width="0.6"/><ellipse cx="1215" cy="56.6" rx="9" ry="2" fill="#a0a0a0" opacity="0.3"/><line x1="1222" y1="52.2" x2="1228.2" y2="58.0" stroke="#5c5c5c" stroke-width="4.6" stroke-linecap="round"/><line x1="1222" y1="52.2" x2="1228.2" y2="58.0" stroke="#7a7a7a" stroke-width="1.6" stroke-linecap="round" opacity="0.7"/><circle cx="1212" cy="42.6" r="11.2" fill="#f3f3ec" stroke="#b8b8ac" stroke-width="0.9"/><circle cx="1212" cy="42.6" r="9.2" fill="url(#gLens)" stroke="#6a90c8" stroke-width="0.6"/><path d="M1212.00 30.00 L1215.00 33.80 L1213.50 33.80 L1213.50 41.10 L1220.80 41.10 L1220.80 39.60 L1224.60 42.60 L1220.80 45.60 L1220.80 44.10 L1213.50 44.10 L1213.50 51.40 L1215.00 51.40 L1212.00 55.20 L1209.00 51.40 L1210.50 51.40 L1210.50 44.10 L1203.20 44.10 L1203.20 45.60 L1199.40 42.60 L1203.20 39.60 L1203.20 41.10 L1210.50 41.10 L1210.50 33.80 L1209.00 33.80 Z" fill="#fff" stroke="#3a6ad0" stroke-width="1" stroke-linejoin="round"/><rect x="7" y="76.5" width="2" height="2" fill="#a3a3a3"/><rect x="7" y="82.7" width="2" height="2" fill="#a3a3a3"/><rect x="7" y="88.9" width="2" height="2" fill="#a3a3a3"/><rect x="7" y="95.1" width="2" height="2" fill="#a3a3a3"/><defs><linearGradient id="gVfade" x1="0" y1="0" x2="0" y2="1"><stop offset="0" stop-color="#f05a5a" stop-opacity="0"/><stop offset="0.2" stop-color="#f05a5a" stop-opacity="0.85"/><stop offset="0.8" stop-color="#f05a5a" stop-opacity="0.85"/><stop offset="1" stop-color="#f05a5a" stop-opacity="0"/></linearGradient><linearGradient id="gHfade" x1="0" y1="0" x2="1" y2="0"><stop offset="0" stop-color="#f05a5a" stop-opacity="0"/><stop offset="0.15" stop-color="#f05a5a" stop-opacity="0.85"/><stop offset="0.85" stop-color="#f05a5a" stop-opacity="0.85"/><stop offset="1" stop-color="#f05a5a" stop-opacity="0"/></linearGradient><linearGradient id="gPink" x1="0" y1="0" x2="0" y2="1"><stop offset="0" stop-color="#efc4c4"/><stop offset="0.55" stop-color="#f6d2d2"/><stop offset="1" stop-color="#e2aeae"/></linearGradient></defs><rect x="11.8" y="69.8" width="49.2" height="36.7" fill="#f0b8b8" opacity="0.45"/><rect x="14.7" y="72.3" width="44" height="32" rx="5" fill="url(#gPink)" stroke="#9a7474" stroke-width="1.8"/><line x1="26.5" y1="94.5" x2="45.3" y2="82.3" stroke="#1a1a1a" stroke-width="1.1"/><circle cx="26.5" cy="94.5" r="1.8" fill="#ff1010"/><circle cx="45.3" cy="82.3" r="1.8" fill="#ff1010"/><rect x="11.2" y="60" width="1.3" height="57" fill="url(#gVfade)"/><rect x="60.3" y="60" width="1.3" height="57" fill="url(#gVfade)"/><rect x="1" y="69.2" width="70" height="1.3" fill="url(#gHfade)"/><rect x="1" y="105.9" width="70" height="1.3" fill="url(#gHfade)"/><line x1="68.3" y1="71" x2="68.3" y2="102" stroke="#7a7a7a" stroke-width="1" stroke-dasharray="1 2"/><rect x="76.3" y="70" width="42.2" height="35" rx="4" fill="#b5b5b5"/><text x="97.3" y="92.7" text-anchor="middle" font-size="11.3" fill="#333" font-family="Liberation Sans">Auto</text><line x1="133.4" y1="95.5" x2="154.5" y2="81.1" stroke="#111" stroke-width="1.1"/><circle cx="133.4" cy="95.5" r="1.9" fill="#ff1010"/><circle cx="154.5" cy="81.1" r="1.9" fill="#ff1010"/><line x1="177" y1="97" x2="203.5" y2="79.5" stroke="#111" stroke-width="1.1"/><path d="M175.4 98 L178.2 92.6 L181 96.5 Z" fill="#111"/><path d="M204.7 78.8 L199.6 79.8 L202.2 84 Z" fill="#111"/><circle cx="189.8" cy="88.3" r="1.9" fill="#ff1010"/><line x1="225.4" y1="95.5" x2="249" y2="79.5" stroke="#111" stroke-width="1.1"/><path d="M250.2 78.8 L244.6 79.6 L247.5 84.2 Z" fill="#111"/><circle cx="225.4" cy="95.5" r="1.9" fill="#ff1010"/><line x1="264.6" y1="71" x2="264.6" y2="105" stroke="#7a7a7a" stroke-width="1" stroke-dasharray="1 2"/><path d="M294.5 78.4 L296.5 87.5 L305.5 91.5 L300.5 96.5 L290.5 98.5 L284.4 88.5" fill="none" stroke="#444" stroke-width="0.9" stroke-linejoin="round"/><line x1="284.4" y1="88.5" x2="294.5" y2="78.4" stroke="#f05050" stroke-width="1"/><circle cx="284.4" cy="88.5" r="1.7" fill="#f05050"/><circle cx="294.5" cy="78.4" r="1.7" fill="#f05050"/><rect x="319" y="70" width="1" height="36" fill="#c8c8c8"/><rect x="320" y="70" width="1" height="36" fill="#fafafa"/><path d="M343.5 92.5 L339.5 97 L347.5 100.5 L359.5 95" fill="none" stroke="#444" stroke-width="0.9" stroke-linejoin="round"/><line x1="335.3" y1="83.3" x2="343.5" y2="92.5" stroke="#f05050" stroke-width="1"/><circle cx="335.3" cy="83.3" r="1.7" fill="#f05050"/><circle cx="343.5" cy="92.5" r="1.7" fill="#f05050"/><path d="M340.5 78 L343 80.7 C345 77.7 348 75.5 351 75.5 C355.5 75.5 359.5 78.5 359.5 83.5 C359.5 88.5 355.5 91.5 349.5 91.8 L349.3 91 C352.5 89.5 354.5 87 354.5 84.5 C354.5 82 353 80.3 351 80.3 C349 80.3 347.5 81.5 346 83.5 L349 86.5 L340.5 86.5 Z" transform="translate(0,0)" fill="#8fcf8f" stroke="#6ab37a" stroke-width="0.6"/><path d="M389.7 92.5 L385.7 97 L393.7 100.5 L405.7 95" fill="none" stroke="#444" stroke-width="0.9" stroke-linejoin="round"/><line x1="381.5" y1="83.3" x2="389.7" y2="92.5" stroke="#f05050" stroke-width="1"/><circle cx="381.5" cy="83.3" r="1.7" fill="#f05050"/><circle cx="389.7" cy="92.5" r="1.7" fill="#f05050"/><path d="M340.5 78 L343 80.7 C345 77.7 348 75.5 351 75.5 C355.5 75.5 359.5 78.5 359.5 83.5 C359.5 88.5 355.5 91.5 349.5 91.8 L349.3 91 C352.5 89.5 354.5 87 354.5 84.5 C354.5 82 353 80.3 351 80.3 C349 80.3 347.5 81.5 346 83.5 L349 86.5 L340.5 86.5 Z" transform="translate(746,0) scale(-1,1)" fill="#8fcf8f" stroke="#6ab37a" stroke-width="0.6"/><rect x="418.2" y="70" width="1" height="36" fill="#c8c8c8"/><rect x="419.2" y="70" width="1" height="36" fill="#fafafa"/><rect x="433.3" y="81.8" width="11.8" height="12" rx="2.5" fill="#fff" stroke="#cfcfcf" stroke-width="0.8"/><rect x="518" y="78.5" width="73.3" height="20" fill="#fff" stroke="#d0d0d0" stroke-width="0.8"/><rect x="597" y="70" width="1" height="36" fill="#c8c8c8"/><rect x="598" y="70" width="1" height="36" fill="#fafafa"/><rect x="611" y="81.8" width="11.8" height="12" rx="2.5" fill="#fff" stroke="#cfcfcf" stroke-width="0.8"/><rect x="684.8" y="78.5" width="73.6" height="20" fill="#fff" stroke="#d0d0d0" stroke-width="0.8"/><line x1="766.7" y1="71" x2="766.7" y2="105" stroke="#7a7a7a" stroke-width="1" stroke-dasharray="1 2"/><defs>
<linearGradient id="gBtn" x1="0" y1="0" x2="0" y2="1"><stop offset="0" stop-color="#f3f3f3"/><stop offset="0.5" stop-color="#e9e9e9"/><stop offset="1" stop-color="#f5f5f5"/></linearGradient>
<linearGradient id="gBtnOn" x1="0" y1="0" x2="0" y2="1"><stop offset="0" stop-color="#c6c6c6"/><stop offset="1" stop-color="#b8b8b8"/></linearGradient>
</defs><rect x="6.5" y="116" width="1.8" height="1.8" fill="#a0a0a0"/><rect x="12.7" y="116" width="1.8" height="1.8" fill="#a0a0a0"/><rect x="19.1" y="116" width="1.8" height="1.8" fill="#a0a0a0"/><rect x="25.3" y="116" width="1.8" height="1.8" fill="#a0a0a0"/><rect x="31.5" y="116" width="1.8" height="1.8" fill="#a0a0a0"/><rect x="1.7" y="121.0" width="68.6" height="24.2" fill="url(#gBtn)" stroke="#8e8e8e" stroke-width="1.2"/><path d="M30.5 132.5 L38 128.8 V136.4 Z" fill="#000"/><rect x="1.7" y="156.9" width="33.5" height="33" fill="url(#gBtn)" stroke="#8e8e8e" stroke-width="1.2"/><rect x="37.0" y="156.9" width="33.5" height="33" fill="url(#gBtn)" stroke="#8e8e8e" stroke-width="1.2"/><rect x="1.7" y="199.7" width="33.5" height="33" fill="url(#gBtn)" stroke="#8e8e8e" stroke-width="1.2"/><rect x="37.0" y="199.7" width="33.5" height="33" fill="url(#gBtn)" stroke="#8e8e8e" stroke-width="1.2"/><rect x="1.7" y="235.0" width="33.5" height="33" fill="url(#gBtn)" stroke="#8e8e8e" stroke-width="1.2"/><rect x="37.0" y="235.0" width="33.5" height="33" fill="url(#gBtn)" stroke="#8e8e8e" stroke-width="1.2"/><rect x="1.7" y="270.0" width="33.5" height="33" fill="url(#gBtn)" stroke="#8e8e8e" stroke-width="1.2"/><rect x="37.0" y="270.0" width="33.5" height="33" fill="url(#gBtn)" stroke="#8e8e8e" stroke-width="1.2"/><rect x="1.7" y="312.8" width="33.5" height="33" fill="url(#gBtn)" stroke="#8e8e8e" stroke-width="1.2"/><rect x="37.0" y="312.8" width="33.5" height="33" fill="url(#gBtn)" stroke="#8e8e8e" stroke-width="1.2"/><rect x="1.7" y="356.3" width="33.5" height="33" fill="url(#gBtn)" stroke="#8e8e8e" stroke-width="1.2"/><rect x="37.0" y="356.3" width="33.5" height="33" fill="url(#gBtn)" stroke="#8e8e8e" stroke-width="1.2"/><rect x="1.7" y="399.4" width="33.5" height="33" fill="url(#gBtn)" stroke="#8e8e8e" stroke-width="1.2"/><rect x="37.0" y="399.4" width="33.5" height="33" fill="url(#gBtn)" stroke="#8e8e8e" stroke-width="1.2"/><rect x="1.7" y="441.5" width="33.5" height="33" rx="4" fill="url(#gBtnOn)" stroke="#a2a2a2" stroke-width="1"/><rect x="1.7" y="485.0" width="33.5" height="33" fill="url(#gBtn)" stroke="#8e8e8e" stroke-width="1.2"/><rect x="37.0" y="485.0" width="33.5" height="33" fill="url(#gBtn)" stroke="#8e8e8e" stroke-width="1.2"/><rect x="1.7" y="528.2" width="33.5" height="33" fill="url(#gBtn)" stroke="#8e8e8e" stroke-width="1.2"/><rect x="37.0" y="528.2" width="33.5" height="33" fill="url(#gBtn)" stroke="#8e8e8e" stroke-width="1.2"/><rect x="1.7" y="570.7" width="33.5" height="33" fill="url(#gBtn)" stroke="#8e8e8e" stroke-width="1.2"/><rect x="1.7" y="614.1" width="33.5" height="33" rx="4" fill="url(#gBtnOn)" stroke="#a2a2a2" stroke-width="1"/><rect x="37.0" y="614.1" width="33.5" height="33" fill="url(#gBtn)" stroke="#8e8e8e" stroke-width="1.2"/><rect x="1.7" y="648.9" width="33.5" height="33" fill="url(#gBtn)" stroke="#8e8e8e" stroke-width="1.2"/><rect x="37.0" y="648.9" width="33.5" height="33" fill="url(#gBtn)" stroke="#8e8e8e" stroke-width="1.2"/><rect x="1.7" y="684.1" width="33.5" height="33" fill="url(#gBtn)" stroke="#8e8e8e" stroke-width="1.2"/><rect x="1.7" y="727.1" width="33.5" height="33" fill="url(#gBtn)" stroke="#8e8e8e" stroke-width="1.2"/><rect x="37.0" y="727.1" width="33.5" height="33" fill="url(#gBtn)" stroke="#8e8e8e" stroke-width="1.2"/><rect x="1.7" y="770.0" width="33.5" height="28" fill="url(#gBtn)" stroke="#8e8e8e" stroke-width="1.2"/><path d="M14.5 173.2 H21.5 M18 169.7 V176.7" stroke="#111" stroke-width="1"/><circle cx="42.5" cy="162.2" r="1.5" fill="#ff1010"/><circle cx="42.5" cy="169.1" r="1.5" fill="#ff1010"/><circle cx="42.5" cy="176" r="1.5" fill="#ff1010"/><circle cx="42.5" cy="182.8" r="1.5" fill="#ff1010"/><circle cx="49.3" cy="162.2" r="1.5" fill="#ff1010"/><circle cx="49.3" cy="169.1" r="1.5" fill="#ff1010"/><circle cx="49.3" cy="176" r="1.5" fill="#ff1010"/><circle cx="49.3" cy="182.8" r="1.5" fill="#ff1010"/><circle cx="56.2" cy="162.2" r="1.5" fill="#ff1010"/><circle cx="56.2" cy="169.1" r="1.5" fill="#ff1010"/><circle cx="56.2" cy="176" r="1.5" fill="#ff1010"/><circle cx="56.2" cy="182.8" r="1.5" fill="#ff1010"/><circle cx="63" cy="162.2" r="1.5" fill="#ff1010"/><circle cx="63" cy="169.1" r="1.5" fill="#ff1010"/><circle cx="63" cy="176" r="1.5" fill="#ff1010"/><circle cx="63" cy="182.8" r="1.5" fill="#ff1010"/><path d="M7.5 215.2 L28.4 226.4" fill="none" stroke="#111" stroke-width="1.1" /><path d="M15.7 205.2 Q17 217 28.4 218.2" fill="none" stroke="#111" stroke-width="1.1" /><circle cx="7.5" cy="215.2" r="1.9" fill="#ff1010"/><circle cx="28.4" cy="226.4" r="1.9" fill="#ff1010"/><circle cx="15.7" cy="205.2" r="1.9" fill="#ff1010"/><circle cx="28.4" cy="218.2" r="1.9" fill="#ff1010"/><path d="M42.6 216.4 L63.8 204.8" fill="none" stroke="#111" stroke-width="1.1" /><path d="M50.8 226.4 L51.8 221.3 L54.6 217.2 L58.7 214.8 L63.4 213.7" fill="none" stroke="#111" stroke-width="1.1" /><circle cx="42.6" cy="216.4" r="1.7" fill="#ff1010"/><circle cx="47.5" cy="213.7" r="1.7" fill="#ff1010"/><circle cx="52.9" cy="211" r="1.7" fill="#ff1010"/><circle cx="58.4" cy="208.2" r="1.7" fill="#ff1010"/><circle cx="63.8" cy="204.8" r="1.7" fill="#ff1010"/><circle cx="50.8" cy="226.4" r="1.7" fill="#ff1010"/><circle cx="51.8" cy="221.3" r="1.7" fill="#ff1010"/><circle cx="54.6" cy="217.2" r="1.7" fill="#ff1010"/><circle cx="58.7" cy="214.8" r="1.7" fill="#ff1010"/><circle cx="63.4" cy="213.7" r="1.7" fill="#ff1010"/><path d="M9.5 241.4 L19.4 252.3" fill="none" stroke="#111" stroke-width="1.1" /><path d="M19.4 252.3 Q23 249 28.6 248.4" fill="none" stroke="#111" stroke-width="1.1" /><path d="M19.4 252.3 Q16.5 256 15.7 261.2" fill="none" stroke="#111" stroke-width="1.1" /><path d="M16.6 248.8 Q19 245.6 22.6 248" fill="none" stroke="#333" stroke-width="0.8" /><rect x="19.2" y="248.4" width="0.7" height="0.7" fill="#333"/><circle cx="19.4" cy="252.3" r="1.9" fill="#ff1010"/><circle cx="56.8" cy="248" r="6.3" fill="none" stroke="#111" stroke-width="1.1"/><path d="M43.4 259.1 L50.7 245.5" fill="none" stroke="#111" stroke-width="1.1" /><circle cx="50.7" cy="245.5" r="1.9" fill="#ff1010"/><path d="M6.5 286.7 L28.6 275.8" fill="none" stroke="#111" stroke-width="1.1" /><path d="M15.3 296.6 Q16.5 285 28.6 283.4" fill="none" stroke="#111" stroke-width="1.1" /><circle cx="17.5" cy="281.2" r="1.9" fill="#ff1010"/><circle cx="28" cy="296" r="1.9" fill="#ff1010"/><circle cx="52.9" cy="286" r="10" fill="none" stroke="#111" stroke-width="1.1"/><circle cx="52.9" cy="286" r="1.9" fill="#ff1010"/><circle cx="52.9" cy="276" r="1.9" fill="#ff1010"/><circle cx="52.9" cy="296" r="1.9" fill="#ff1010"/><circle cx="42.9" cy="286" r="1.9" fill="#ff1010"/><circle cx="62.9" cy="286" r="1.9" fill="#ff1010"/><path d="M6.9 329.6 L29 318" fill="none" stroke="#111" stroke-width="1.1" /><path d="M15.4 339.6 Q16.5 327.5 28.5 326.5" fill="none" stroke="#111" stroke-width="1.1" /><circle cx="18" cy="323.9" r="1.9" fill="#ff1010"/><circle cx="19.3" cy="330.3" r="1.9" fill="#ff1010"/><rect x="41.8" y="319.6" width="22.4" height="18.4" fill="none" stroke="#333" stroke-width="1.6"/><path d="M43.9 335.7 L63.2 321.1" fill="none" stroke="#888" stroke-width="0.8" stroke-dasharray="1.5 1.5"/><circle cx="52.9" cy="328.8" r="1.9" fill="#ff1010"/><path d="M8.5 372.4 L29 361.6" fill="none" stroke="#111" stroke-width="1.1" /><path d="M16.2 382 Q17 370.5 29 369.6" fill="none" stroke="#111" stroke-width="1.1" /><path d="M6.2 368 L11.5 364.8 L12.5 367.2 Z" fill="#111"/><path d="M20 382.5 L21.3 376 L23.3 378.5 Z" fill="#111"/><path d="M6 369.5 L10 367.5" fill="none" stroke="#111" stroke-width="1.4" /><path d="M19.8 380 L20.8 376.5" fill="none" stroke="#111" stroke-width="1.4" /><circle cx="15.1" cy="368.6" r="1.9" fill="#ff1010"/><circle cx="18.8" cy="374.3" r="1.9" fill="#ff1010"/><path d="M49.6 368.6 L63.2 361.2" fill="none" stroke="#222" stroke-width="0.9" stroke-dasharray="2 1.6"/><circle cx="63.2" cy="361.2" r="1.2" fill="#111"/><path d="M41.2 367.5 L46.5 364.6 L46.8 367.3 Z" fill="#111"/><circle cx="42.4" cy="372.2" r="1.2" fill="#111"/><path d="M43 370 L46.5 368" fill="none" stroke="#111" stroke-width="1.2" /><circle cx="49.6" cy="368.6" r="1.9" fill="#ff1010"/><text x="42.6" y="384.5" text-anchor="middle" font-size="10.2" fill="#111">1</text><text x="63.6" y="375.2" text-anchor="middle" font-size="10.2" fill="#111">2</text><path d="M5.9 412.8 L30 420.2" fill="none" stroke="#111" stroke-width="1.1" /><path d="M24.3 403.2 L18.5 427" fill="none" stroke="#111" stroke-width="1.1" /><circle cx="20.8" cy="417.4" r="1.9" fill="#ff1010"/><path d="M43.1 416.6 L53.2 419.7" fill="none" stroke="#111" stroke-width="1.1" /><path d="M62.9 406.6 L60.1 415.9" fill="none" stroke="#111" stroke-width="1.1" /><circle cx="58.6" cy="421.7" r="1.9" fill="#ff1010"/><text x="18.8" y="461.9" text-anchor="middle" font-size="10.6" fill="#262626">Auto</text><path d="M14.6 489.2 V503.8 H30.8" fill="none" stroke="#333" stroke-width="1.1" /><text x="9.7" y="496.5" text-anchor="middle" font-size="10" fill="#222">y</text><text x="27.3" y="513.2" text-anchor="middle" font-size="10" fill="#222">x</text><circle cx="28" cy="490.7" r="1.6" fill="#ff1010"/><path d="M40.8 510.3 L57.8 493.3 M40.8 510.3 H64.7" fill="none" stroke="#222" stroke-width="1.1" /><path d="M57.8 493.3 Q63.5 499 64.7 510.3" fill="none" stroke="#222" stroke-width="1.1" /><text x="46.2" y="500.2" text-anchor="middle" font-size="9.5" fill="#222">r</text><text x="57.8" y="507.2" text-anchor="middle" font-size="9.5" fill="#222">a</text><circle cx="57.8" cy="493.3" r="1.6" fill="#ff1010"/><path d="M9.6 535.8 H26.2 M9.6 535.8 V551.9" fill="none" stroke="#c8c8c8" stroke-width="0.8" /><circle cx="9.6" cy="535.8" r="1.9" fill="#ff1010"/><circle cx="26.2" cy="535.8" r="1.1" fill="#111"/><circle cx="9.6" cy="551.9" r="1.1" fill="#111"/><text x="26.6" y="546.3" text-anchor="middle" font-size="10" fill="#222">2</text><text x="16.6" y="554.8" text-anchor="middle" font-size="10" fill="#222">1</text><path d="M44.7 551.9 H60.9 V535.8" fill="none" stroke="#c8c8c8" stroke-width="0.8" /><circle cx="60.9" cy="551.9" r="1.9" fill="#ff1010"/><circle cx="44.7" cy="551.9" r="1.1" fill="#111"/><circle cx="60.9" cy="535.8" r="1.1" fill="#111"/><text x="55.9" y="540.9" text-anchor="middle" font-size="10" fill="#222">2</text><text x="45" y="548.6" text-anchor="middle" font-size="10" fill="#222">1</text><path d="M7.8 581 Q7.8 577.4 11.3 577.4 H27.8 Q29.3 577.4 29.3 579 V596.3 H17.5 V593 H11.3 Q7.8 593 7.8 589.5 Z" fill="none" stroke="#f0a0a0" stroke-width="0.9"/><circle cx="13.9" cy="584.3" r="3.7" fill="none" stroke="#f0a0a0" stroke-width="0.9"/><path d="M25 582.5 V592.5 H17.5 Z" fill="none" stroke="#f0a0a0" stroke-width="0.9"/><circle cx="18" cy="587.1" r="1.6" fill="#ff1010"/><path d="M14.7 630.3 H21.3 M18 627 V633.6" stroke="#222" stroke-width="1"/><path d="M40.8 629.5 H64.4 M52.7 617.9 V641" fill="none" stroke="#111" stroke-width="1.1" /><circle cx="52.7" cy="629.5" r="3.4" fill="none" stroke="#ff1010" stroke-width="1"/><path d="M49.300000000000004 629.5 H56.1 M52.7 626.1 V632.9" stroke="#ff1010" stroke-width="0.9"/><path d="M5.9 664.5 H29.3" fill="none" stroke="#111" stroke-width="1.1" /><circle cx="17.4" cy="664.5" r="3.4" fill="none" stroke="#ff1010" stroke-width="1"/><path d="M13.999999999999998 664.5 H20.799999999999997 M17.4 661.1 V667.9" stroke="#ff1010" stroke-width="0.9"/><path d="M52.7 653 V676.2" fill="none" stroke="#111" stroke-width="1.1" /><circle cx="52.7" cy="664.5" r="3.4" fill="none" stroke="#ff1010" stroke-width="1"/><path d="M49.300000000000004 664.5 H56.1 M52.7 661.1 V667.9" stroke="#ff1010" stroke-width="0.9"/><path d="M9.3 688.5 L9.7 692.5" fill="none" stroke="#8a8a8a" stroke-width="1.4" /><path d="M14.2 689.2 L14.9 693.1" fill="none" stroke="#8a8a8a" stroke-width="1.4" /><path d="M18.5 691.4 L19.9 694.9" fill="none" stroke="#8a8a8a" stroke-width="1.4" /><path d="M22.4 694.2 L24.1 697.3" fill="none" stroke="#8a8a8a" stroke-width="1.4" /><path d="M25.6 704.2 L28.4 705.3" fill="none" stroke="#8a8a8a" stroke-width="1.4" /><path d="M25.3 709.8 L29.8 709.8" fill="none" stroke="#8a8a8a" stroke-width="1.4" /><path d="M8.8 709.1 L27 698.2" fill="none" stroke="#111" stroke-width="1.1" /><circle cx="8.8" cy="709.1" r="3.4" fill="none" stroke="#ff1010" stroke-width="1"/><path d="M5.4 709.1 H12.200000000000001 M8.8 705.7 V712.5" stroke="#ff1010" stroke-width="0.9"/><circle cx="14.9" cy="736.8" r="3.4" fill="none" stroke="#ff1010" stroke-width="1"/><path d="M11.5 736.8 H18.3 M14.9 733.4 V740.1999999999999" stroke="#ff1010" stroke-width="0.9"/><path d="M16.3 739.5 V750.5 L18.6 748.3 L20.8 752.3 L22.5 751.5 L20.4 747.6 L23.5 747.4 Z" fill="#f4f4f4" stroke="#555" stroke-width="0.8" stroke-linejoin="round"/><ellipse cx="46.4" cy="738.4" rx="2.6" ry="3.7" fill="none" stroke="#111" stroke-width="1.4"/><path d="M48.6 737.6 H61.7 V742.4 H60.2 V740 H58 V741.4 H56.8 V739.2 H48.6 Z" fill="#111"/><circle cx="52.6" cy="750.3" r="3.4" fill="none" stroke="#ff1010" stroke-width="1"/><path d="M49.2 750.3 H56.0 M52.6 746.9 V753.6999999999999" stroke="#ff1010" stroke-width="0.9"/><ellipse cx="11.2" cy="785.1" rx="2.6" ry="3.7" fill="none" stroke="#111" stroke-width="1.4"/><path d="M13.4 784.3 H26.4 V789.1 H24.9 V786.7 H22.7 V788.1 H21.5 V785.9 H13.4 Z" fill="#111"/><circle cx="1164" cy="117.7" r="6.9" fill="#6c6c6c"/><path d="M1161.2 114.9 L1166.8 120.5 M1166.8 114.9 L1161.2 120.5" stroke="#fff" stroke-width="1.6" stroke-linecap="round"/><circle cx="1181.8" cy="117.7" r="6.9" fill="#6c6c6c"/><rect x="1180.5" y="113.8" width="5" height="4.2" fill="none" stroke="#fff" stroke-width="1.1"/><rect x="1178" y="116.3" width="5" height="4.2" fill="#6c6c6c" stroke="#fff" stroke-width="1.1"/><g transform="translate(1185,142.6) scale(1.0)"><path d="M-7.6 0.6 Q-4 -5.8 0.8 -5.6 Q5.8 -5.4 7.6 -0.2 L6.6 0.6 Q4.5 5.6 0 5.6 Q-4.8 5.6 -7.6 0.6 Z" fill="#000"/><path d="M-5 1 Q-2.5 -2.2 0.5 -2.2 Q3.8 -2.2 5 0.6 Q3 3.6 0.2 3.6 Q-3 3.6 -5 1 Z" fill="#fff"/><circle cx="0.2" cy="0" r="2.9" fill="#000"/><circle cx="-0.6" cy="-0.9" r="0.75" fill="#fff" opacity="0.8"/></g><g transform="translate(1245,142.6) scale(1.0)"><path d="M-7.6 0.6 Q-4 -5.8 0.8 -5.6 Q5.8 -5.4 7.6 -0.2 L6.6 0.6 Q4.5 5.6 0 5.6 Q-4.8 5.6 -7.6 0.6 Z" fill="#a8a8a8"/><path d="M-5 1 Q-2.5 -2.2 0.5 -2.2 Q3.8 -2.2 5 0.6 Q3 3.6 0.2 3.6 Q-3 3.6 -5 1 Z" fill="#fff"/><circle cx="0.2" cy="0" r="2.9" fill="#a8a8a8"/><circle cx="-0.6" cy="-0.9" r="0.75" fill="#fff" opacity="0.8"/></g><path d="M1303.4 136.9 h3.4 v4.3 h4.3 v3.4 h-4.3 v4.3 h-3.4 v-4.3 h-4.3 v-3.4 h4.3 Z" fill="#ee0000" stroke="#8a1010" stroke-width="0.5"/><rect x="1358.8" y="141.2" width="12" height="3.4" fill="#ee0000" stroke="#8a1010" stroke-width="0.5"/><g transform="translate(1418.1,149.4) rotate(-42.69)"><path d="M0 0 L3.5 -1.3 H17.11967908636169 Q19.31967908636169 -1.3 19.31967908636169 0 Q19.31967908636169 1.3 17.11967908636169 1.3 H3.5 Z" fill="#e8b040" stroke="#8a6020" stroke-width="0.5"/><path d="M0 0 L3.5 -1.3 V1.3 Z" fill="#f4dcb0"/><path d="M0 0 L1.3 -0.481 V0.481 Z" fill="#333"/><path d="M16.31967908636169 -1.3 H17.11967908636169 Q19.31967908636169 -1.3 19.31967908636169 0 Q19.31967908636169 1.3 17.11967908636169 1.3 H16.31967908636169 Z" fill="#e02828"/></g><rect x="1161.5" y="163.5" width="15.5" height="8" fill="#fff" stroke="#111" stroke-width="1"/><g transform="translate(1394.5,173.2) rotate(-44.32)"><path d="M0 0 L3.5 -1.3 H15.691059219621373 Q17.891059219621372 -1.3 17.891059219621372 0 Q17.891059219621372 1.3 15.691059219621373 1.3 H3.5 Z" fill="#e8b040" stroke="#8a6020" stroke-width="0.5"/><path d="M0 0 L3.5 -1.3 V1.3 Z" fill="#f4dcb0"/><path d="M0 0 L1.3 -0.481 V0.481 Z" fill="#333"/><path d="M14.891059219621372 -1.3 H15.691059219621373 Q17.891059219621372 -1.3 17.891059219621372 0 Q17.891059219621372 1.3 15.691059219621373 1.3 H14.891059219621372 Z" fill="#e02828"/></g><g transform="translate(1422.9,166.4) scale(0.95)"><path d="M-7.6 0.6 Q-4 -5.8 0.8 -5.6 Q5.8 -5.4 7.6 -0.2 L6.6 0.6 Q4.5 5.6 0 5.6 Q-4.8 5.6 -7.6 0.6 Z" fill="#000"/><path d="M-5 1 Q-2.5 -2.2 0.5 -2.2 Q3.8 -2.2 5 0.6 Q3 3.6 0.2 3.6 Q-3 3.6 -5 1 Z" fill="#fff"/><circle cx="0.2" cy="0" r="2.9" fill="#000"/><circle cx="-0.6" cy="-0.9" r="0.75" fill="#fff" opacity="0.8"/></g><path d="M1441.8 166.3 V163.8 Q1441.8 160.2 1445 160.2 Q1448.3 160.2 1448.3 163.8 V166.3" fill="none" stroke="#b8b8b8" stroke-width="1.4"/><rect x="1440.2" y="166" width="9.7" height="7.4" rx="0.8" fill="#b8b8b8"/><rect x="1462.0" y="116" width="1.8" height="1.8" fill="#a0a0a0"/><rect x="1468.1" y="116" width="1.8" height="1.8" fill="#a0a0a0"/><rect x="1474.1" y="116" width="1.8" height="1.8" fill="#a0a0a0"/><rect x="1480.0" y="116" width="1.8" height="1.8" fill="#a0a0a0"/><rect x="1486.1" y="116" width="1.8" height="1.8" fill="#a0a0a0"/><rect x="1456.5" y="120.3" width="44" height="42.3" rx="5" fill="#b8b8b8"/><rect x="1456.5" y="417" width="44" height="43.2" rx="5" fill="#b8b8b8"/><rect x="1458" y="261.2" width="1.2" height="1.2" fill="#9a9a9a"/><rect x="1458" y="409" width="1.2" height="1.2" fill="#9a9a9a"/><rect x="1461" y="261.2" width="1.2" height="1.2" fill="#9a9a9a"/><rect x="1461" y="409" width="1.2" height="1.2" fill="#9a9a9a"/><rect x="1464" y="261.2" width="1.2" height="1.2" fill="#9a9a9a"/><rect x="1464" y="409" width="1.2" height="1.2" fill="#9a9a9a"/><rect x="1467" y="261.2" width="1.2" height="1.2" fill="#9a9a9a"/><rect x="1467" y="409" width="1.2" height="1.2" fill="#9a9a9a"/><rect x="1470" y="261.2" width="1.2" height="1.2" fill="#9a9a9a"/><rect x="1470" y="409" width="1.2" height="1.2" fill="#9a9a9a"/><rect x="1473" y="261.2" width="1.2" height="1.2" fill="#9a9a9a"/><rect x="1473" y="409" width="1.2" height="1.2" fill="#9a9a9a"/><rect x="1476" y="261.2" width="1.2" height="1.2" fill="#9a9a9a"/><rect x="1476" y="409" width="1.2" height="1.2" fill="#9a9a9a"/><rect x="1479" y="261.2" width="1.2" height="1.2" fill="#9a9a9a"/><rect x="1479" y="409" width="1.2" height="1.2" fill="#9a9a9a"/><rect x="1482" y="261.2" width="1.2" height="1.2" fill="#9a9a9a"/><rect x="1482" y="409" width="1.2" height="1.2" fill="#9a9a9a"/><rect x="1485" y="261.2" width="1.2" height="1.2" fill="#9a9a9a"/><rect x="1485" y="409" width="1.2" height="1.2" fill="#9a9a9a"/><rect x="1488" y="261.2" width="1.2" height="1.2" fill="#9a9a9a"/><rect x="1488" y="409" width="1.2" height="1.2" fill="#9a9a9a"/><rect x="1491" y="261.2" width="1.2" height="1.2" fill="#9a9a9a"/><rect x="1491" y="409" width="1.2" height="1.2" fill="#9a9a9a"/><rect x="1494" y="261.2" width="1.2" height="1.2" fill="#9a9a9a"/><rect x="1494" y="409" width="1.2" height="1.2" fill="#9a9a9a"/><rect x="1497" y="261.2" width="1.2" height="1.2" fill="#9a9a9a"/><rect x="1497" y="409" width="1.2" height="1.2" fill="#9a9a9a"/><rect x="1463.8" y="127.7" width="27" height="27" fill="#fff" stroke="#111" stroke-width="1"/><rect x="1463.3" y="127.2" width="28" height="4.3" fill="#000"/><rect x="1464.8" y="128.4" width="2.6" height="2.6" fill="#fff"/><path d="M1470 139 L1482 136.5 V148.5 L1470 151 Z" fill="#b8b8b8" stroke="#555" stroke-width="0.7"/><path d="M1472 138 L1484 135.5 V147.5 L1472 150 Z" fill="#e8e8e8" stroke="#555" stroke-width="0.7"/><path d="M1474.5 137.5 L1486 135 V146.5 L1474.5 149 Z" fill="#fff" stroke="#555" stroke-width="0.7"/><path d="M1477 146.5 L1480.5 139.5 L1482.5 145.5" fill="none" stroke="#e02020" stroke-width="0.8"/><rect x="1463.8" y="174.8" width="27" height="27" fill="#fff" stroke="#111" stroke-width="1"/><rect x="1463.3" y="174.3" width="28" height="4.3" fill="#000"/><rect x="1464.8" y="175.5" width="2.6" height="2.6" fill="#fff"/><rect x="1469.5" y="184.5" width="10.5" height="8" fill="#f4eac0" stroke="#555" stroke-width="0.8"/><circle cx="1479.3" cy="191.6" r="4.6" fill="#f4eac0" fill-opacity="0.8" stroke="#555" stroke-width="0.8"/><rect x="1463.8" y="220.5" width="27" height="27" fill="#fff" stroke="#111" stroke-width="1"/><rect x="1463.3" y="220" width="28" height="4.3" fill="#000"/><rect x="1464.8" y="221.2" width="2.6" height="2.6" fill="#fff"/><rect x="1468.5" y="228.5" width="18" height="13" rx="2" fill="#eef1f8" stroke="#b8c8e0" stroke-width="0.8"/><rect x="1463.8" y="276.5" width="27" height="27" fill="#fff" stroke="#111" stroke-width="1"/><rect x="1463.3" y="276" width="28" height="4.3" fill="#000"/><rect x="1464.8" y="277.2" width="2.6" height="2.6" fill="#fff"/><rect x="1467" y="284.6" width="3.5" height="2.8" fill="#111"/><rect x="1472" y="284.6" width="14" height="2.8" fill="#fff" stroke="#333" stroke-width="0.6"/><rect x="1467" y="290.2" width="3.5" height="2.8" fill="#111"/><rect x="1472" y="290.2" width="14" height="2.8" fill="#fff" stroke="#333" stroke-width="0.6"/><rect x="1467" y="295.8" width="3.5" height="2.8" fill="#111"/><rect x="1472" y="295.8" width="14" height="2.8" fill="#fff" stroke="#333" stroke-width="0.6"/><rect x="1463.8" y="322.1" width="27" height="27" fill="#fff" stroke="#111" stroke-width="1"/><rect x="1463.3" y="321.6" width="28" height="4.3" fill="#000"/><rect x="1464.8" y="322.8" width="2.6" height="2.6" fill="#fff"/><path d="M1468.8 330.5 H1486.2 L1479.5 338 V345.5 H1475.5 V338 Z" fill="#d8d8d8" stroke="#444" stroke-width="0.8"/><ellipse cx="1477.5" cy="330.7" rx="8.7" ry="1.6" fill="#f0f0f0" stroke="#444" stroke-width="0.7"/><rect x="1463.8" y="368.3" width="27" height="27" fill="#fff" stroke="#111" stroke-width="1"/><rect x="1463.3" y="367.8" width="28" height="4.3" fill="#000"/><rect x="1464.8" y="369.0" width="2.6" height="2.6" fill="#fff"/><path d="M1468.5 377.5 V389.5 L1475 384.5 V382 Z" fill="#fff" stroke="#444" stroke-width="0.8"/><rect x="1475" y="380" width="10" height="7" fill="#ddd" stroke="#555" stroke-width="0.7"/><path d="M1466.5 383.7 H1488" stroke="#f06060" stroke-width="0.8" stroke-dasharray="1.2 1"/><rect x="1463.8" y="424.5" width="27" height="27" fill="#fff" stroke="#111" stroke-width="1"/><rect x="1463.3" y="424" width="28" height="4.3" fill="#000"/><rect x="1464.8" y="425.2" width="2.6" height="2.6" fill="#fff"/><text x="1467" y="436" font-size="3.2" fill="#333">Comando: 00</text><text x="1467" y="440" font-size="3.2" fill="#333">Command: line</text><text x="1467" y="444" font-size="3.2" fill="#333">Comando: 000</text><text x="1467" y="448" font-size="3.2" fill="#333">Comando: rectn</text><path d="M1464 448.7 H1491" stroke="#333" stroke-width="0.5"/><text x="1466" y="451.3" font-size="2.8" fill="#111">C   command</text><rect x="1463.8" y="471.5" width="27" height="27" fill="#fff" stroke="#111" stroke-width="1"/><rect x="1463.3" y="471" width="28" height="4.3" fill="#000"/><rect x="1464.8" y="472.2" width="2.6" height="2.6" fill="#fff"/><rect x="1470.5" y="478.5" width="14" height="16" rx="0.8" fill="#c98a24" stroke="#8a5a10" stroke-width="0.5"/><rect x="1472.3" y="480" width="10.4" height="13" fill="#fafafa"/><rect x="1474.5" y="477" width="6" height="3.3" fill="#9a9a8a" stroke="#555" stroke-width="0.4"/><path d="M1473.5 483 H1481 M1473.5 485 H1481 M1473.5 487 H1480 M1473.5 489 H1481" stroke="#bbb" stroke-width="0.6"/><circle cx="509" cy="822" r="2.8" fill="#c4c4c4"/><rect x="717.5" y="806.3" width="17.6" height="29.3" rx="8.8" fill="#fff" stroke="#444" stroke-width="0.9"/><path d="M717.6 819.2 Q726.3 816.4 735 819.2" fill="none" stroke="#444" stroke-width="1.1"/><path d="M726.3 806.5 V817.5" stroke="#444" stroke-width="0.8"/><rect x="724.6" y="809" width="3.4" height="6" rx="1.6" fill="#fff" stroke="#444" stroke-width="0.8"/><circle cx="943.3" cy="822" r="2.8" fill="#c4c4c4"/><circle cx="1272" cy="822" r="2.8" fill="#c4c4c4"/></svg>
<div class="t" style="left:14.5px;top:3.66px;font-size:13.4px;line-height:13.4px;color:#262626;">Fichero</div>
<div class="t" style="left:71.5px;top:3.66px;font-size:13.4px;line-height:13.4px;color:#262626;">Editar</div>
<div class="t" style="left:118.7px;top:3.66px;font-size:13.4px;line-height:13.4px;color:#262626;">Ver</div>
<div class="t" style="left:150.4px;top:3.66px;font-size:13.4px;line-height:13.4px;color:#262626;">Seleccionar</div>
<div class="t" style="left:232.7px;top:3.66px;font-size:13.4px;line-height:13.4px;color:#262626;">Dibujar</div>
<div class="t" style="left:287.7px;top:3.66px;font-size:13.4px;line-height:13.4px;color:#262626;">Acotación</div>
<div class="t" style="left:359.7px;top:3.66px;font-size:13.4px;line-height:13.4px;color:#262626;">Modificar</div>
<div class="t" style="left:428.3px;top:3.66px;font-size:13.4px;line-height:13.4px;color:#262626;">Forzar</div>
<div class="t" style="left:478.5px;top:3.66px;font-size:13.4px;line-height:13.4px;color:#262626;">Información</div>
<div class="t" style="left:561.6px;top:3.66px;font-size:13.4px;line-height:13.4px;color:#262626;">Capa</div>
<div class="t" style="left:604.7px;top:3.66px;font-size:13.4px;line-height:13.4px;color:#262626;">Bloque</div>
<div class="t" style="left:659.2px;top:3.66px;font-size:13.4px;line-height:13.4px;color:#262626;">Ventana</div>
<div class="t" style="left:720px;top:3.66px;font-size:13.4px;line-height:13.4px;color:#262626;">Diverso</div>
<div class="t" style="left:778.2px;top:3.66px;font-size:13.4px;line-height:13.4px;color:#262626;">Ayuda</div>
<div class="t" style="left:600.5px;top:114.54px;font-size:12px;line-height:12px;color:#1e1e1e;">* Sin título 1</div>
<div class="t" style="left:1103.6px;top:734.73px;font-size:12.6px;line-height:12.6px;color:#1a1a1a;">10 &lt; 100</div>
<div class="t" style="left:77.6px;top:751.43px;font-size:13.2px;line-height:13.2px;color:#1a1aee;"><i>Comando:</i> line</div>
<div class="t" style="left:73px;top:778.54px;font-size:13.3px;line-height:13.3px;color:#1e1e1e;">Primer punto:</div>
<div class="t" style="left:451px;top:81.79px;font-size:13.6px;line-height:13.6px;color:#262626;">Longitud:</div>
<div class="t" style="left:519.7px;top:82.50px;font-size:13px;line-height:13px;color:#111;">1</div>
<div class="t" style="left:629.2px;top:81.79px;font-size:13.6px;line-height:13.6px;color:#262626;">Ángulo:</div>
<div class="t" style="left:686.5px;top:82.50px;font-size:13px;line-height:13px;color:#111;">0</div>
<div class="t" style="left:1284.5px;top:112.99px;font-size:12.3px;line-height:12.3px;color:#2a2a2a;">Lista de capas</div>
<div class="t" style="left:1183.3px;top:160.84px;font-size:13.3px;line-height:13.3px;color:#111;">0</div>
<div class="t" style="left:2.1px;top:807.76px;font-size:9.5px;line-height:9.5px;color:#1e1e1e;letter-spacing:0.648px">43.4,64.6</div>
<div class="t" style="left:2.1px;top:827.86px;font-size:9.5px;line-height:9.5px;color:#1e1e1e;letter-spacing:0.358px">@3.4,4.6</div>
<div class="t" style="left:256.4px;top:807.86px;font-size:9.5px;line-height:9.5px;color:#1e1e1e;letter-spacing:0.435px">77.8249&lt;56°</div>
<div class="t" style="left:256.4px;top:827.86px;font-size:9.5px;line-height:9.5px;color:#1e1e1e;letter-spacing:0.159px">@5.7201&lt;54°</div>
<div class="t" style="left:640.7px;top:817.74px;font-size:9.4px;line-height:9.4px;color:#1e1e1e;letter-spacing:0.336px">Primer punto</div>
<div class="t" style="left:754.4px;top:817.74px;font-size:9.4px;line-height:9.4px;color:#1e1e1e;letter-spacing:0.169px">Cancelar</div>
<div class="t" style="left:949.2px;top:817.74px;font-size:9.4px;line-height:9.4px;color:#1e1e1e;letter-spacing:0.362px">No hay entidades seleccionadas.</div>
<div class="r" style="left:31.3px;top:103.3px;width:197.5px;height:24.4px;box-sizing:border-box;border:1px solid #b6bcc6;border-radius:2px;background:linear-gradient(#f6f8fb,#e9edf3 60%,#dde3ec);box-shadow:1px 1.5px 1.5px rgba(0,0,0,0.45)"></div>
<div class="t" style="left:36.9px;top:108.55px;font-size:14px;line-height:14px;color:#111">Icono de la herramienta actual</div>
</body></html>
